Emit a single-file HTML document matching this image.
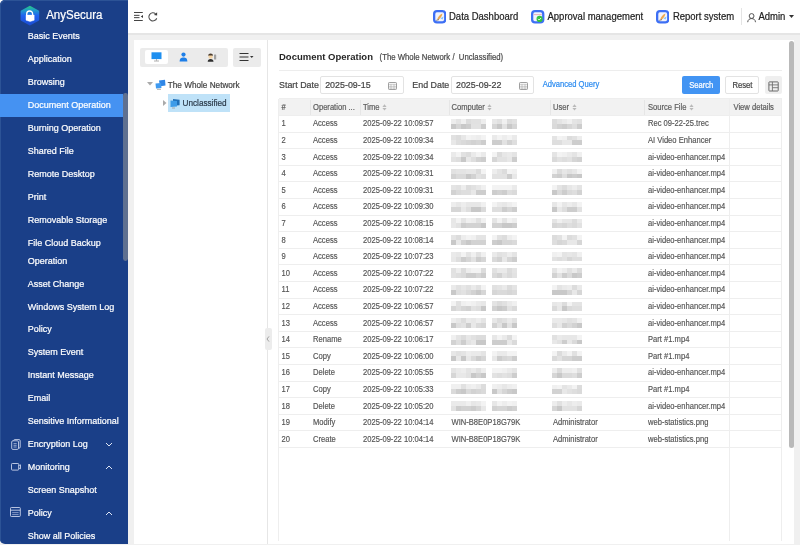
<!DOCTYPE html><html><head><meta charset="utf-8"><style>
*{margin:0;padding:0;box-sizing:border-box}
html,body{width:800px;height:545px;overflow:hidden;background:#f0f0f0;font-family:"Liberation Sans", sans-serif}
.a{position:absolute}
.t{position:absolute;white-space:nowrap;line-height:1;-webkit-text-stroke:0.2px currentColor;transform:scaleY(1.1);transform-origin:0 60%}
.tb{-webkit-text-stroke:0.15px currentColor}
.ns{transform:scaleY(1.03);-webkit-text-stroke:0}
i{position:absolute;display:block}
</style></head><body>

<div class="a" style="left:0;top:0;width:800px;height:35px;background:#fff;border-bottom:2px solid #e5e5e5"></div>
<div class="a" style="left:0;top:0;width:128px;height:544px;background:#1a3f88;border-radius:5px 0 0 5px;overflow:hidden;box-shadow:inset 1px 1px 0 #2c5396">
<svg class="a" style="left:20px;top:5px" width="20" height="21" viewBox="0 0 20 21">
<defs><linearGradient id="lg" x1="0" y1="0" x2="0" y2="1"><stop offset="0" stop-color="#27c08e"/><stop offset="0.18" stop-color="#1f9fc8"/><stop offset="0.5" stop-color="#1d63f2"/><stop offset="1" stop-color="#1c4ed2"/></linearGradient></defs>
<path d="M9.9 1.9 L18.1 6.4 L18.1 14.8 L9.9 19.3 L1.7 14.8 L1.7 6.4 Z" fill="url(#lg)" stroke="url(#lg)" stroke-width="2.2" stroke-linejoin="round"/>
<path d="M6.7 10.3 V8.9 A2.95 2.95 0 0 1 12.6 8.9 V10.3" fill="none" stroke="#fff" stroke-width="1.35"/>
<path d="M6 10.1 H14.2 V15.2 L10.1 16.6 L6 15.2 Z" fill="#fff" stroke="#fff" stroke-width="0.4" stroke-linejoin="round"/>
</svg>
<div class="t" style="left:46.2px;top:10.3px;font-size:11.5px;color:#fff">AnySecura</div>
<div class="t" style="left:27.7px;top:31.6px;font-size:9px;color:#fff">Basic Events</div>
<div class="t" style="left:27.7px;top:54.6px;font-size:9px;color:#fff">Application</div>
<div class="t" style="left:27.7px;top:77.6px;font-size:9px;color:#fff">Browsing</div>
<div class="a" style="left:0;top:93.5px;width:122.8px;height:23.3px;background:#4592f2"></div>
<div class="t" style="left:27.7px;top:100.6px;font-size:9px;color:#fff">Document Operation</div>
<div class="t" style="left:27.7px;top:123.6px;font-size:9px;color:#fff">Burning Operation</div>
<div class="t" style="left:27.7px;top:146.6px;font-size:9px;color:#fff">Shared File</div>
<div class="t" style="left:27.7px;top:169.6px;font-size:9px;color:#fff">Remote Desktop</div>
<div class="t" style="left:27.7px;top:192.6px;font-size:9px;color:#fff">Print</div>
<div class="t" style="left:27.7px;top:215.6px;font-size:9px;color:#fff">Removable Storage</div>
<div class="t" style="left:27.7px;top:238.6px;font-size:9px;color:#fff">File Cloud Backup</div>
<div class="t" style="left:27.7px;top:256.6px;font-size:9px;color:#fff">Operation</div>
<div class="t" style="left:27.7px;top:279.6px;font-size:9px;color:#fff">Asset Change</div>
<div class="t" style="left:27.7px;top:302.6px;font-size:9px;color:#fff">Windows System Log</div>
<div class="t" style="left:27.7px;top:324.6px;font-size:9px;color:#fff">Policy</div>
<div class="t" style="left:27.7px;top:347.6px;font-size:9px;color:#fff">System Event</div>
<div class="t" style="left:27.7px;top:370.6px;font-size:9px;color:#fff">Instant Message</div>
<div class="t" style="left:27.7px;top:393.6px;font-size:9px;color:#fff">Email</div>
<div class="t" style="left:27.7px;top:416.6px;font-size:9px;color:#fff">Sensitive Informational</div>
<div class="t" style="left:27.7px;top:439.6px;font-size:9px;color:#fff">Encryption Log</div>
<div class="t" style="left:27.7px;top:462.6px;font-size:9px;color:#fff">Monitoring</div>
<div class="t" style="left:27.7px;top:485.6px;font-size:9px;color:#fff">Screen Snapshot</div>
<div class="t" style="left:27.7px;top:508.6px;font-size:9px;color:#fff">Policy</div>
<div class="t" style="left:27.7px;top:531.6px;font-size:9px;color:#fff">Show all Policies</div>
<svg class="a" style="left:11px;top:438.5px" width="10" height="11" viewBox="0 0 10 11"><rect x="2.6" y="0.6" width="6.6" height="8.6" rx="1.2" fill="none" stroke="#c9d3ea" stroke-width="0.9"/><rect x="0.7" y="1.8" width="6.8" height="8.6" rx="1.2" fill="#1a3f88" stroke="#c9d3ea" stroke-width="0.9"/><path d="M2.5 4.6h3.2M2.5 6.3h3.2M2.5 8h3.2" stroke="#c9d3ea" stroke-width="0.7"/></svg>
<svg class="a" style="left:11.3px;top:463.3px" width="10" height="8" viewBox="0 0 10 8"><rect x="0.5" y="0.5" width="7.2" height="6.6" rx="0.8" fill="none" stroke="#c9d3ea" stroke-width="0.9"/><path d="M7.7 2.6 L9.5 1.8 V5.8 L7.7 5" fill="none" stroke="#c9d3ea" stroke-width="0.9"/></svg>
<svg class="a" style="left:10px;top:507.3px" width="11" height="10" viewBox="0 0 11 10"><rect x="0.5" y="0.5" width="9.8" height="9" rx="0.8" fill="none" stroke="#c9d3ea" stroke-width="0.9"/><path d="M0.5 3.2h9.8" stroke="#c9d3ea" stroke-width="0.9"/><path d="M2.2 5.6h6.4M2.2 7.6h6.4" stroke="#9fb0d6" stroke-width="0.8"/></svg>
<svg class="a" style="left:105.3px;top:441.5px" width="8" height="5" viewBox="0 0 8 5"><path d="M1 1 L4 4 L7 1" fill="none" stroke="#dfe6f5" stroke-width="1"/></svg>
<svg class="a" style="left:105.3px;top:465px" width="8" height="5" viewBox="0 0 8 5"><path d="M1 4 L4 1 L7 4" fill="none" stroke="#dfe6f5" stroke-width="1"/></svg>
<svg class="a" style="left:105.3px;top:510.8px" width="8" height="5" viewBox="0 0 8 5"><path d="M1 4 L4 1 L7 4" fill="none" stroke="#dfe6f5" stroke-width="1"/></svg>
<div class="a" style="left:122.8px;top:93px;width:4.8px;height:168px;background:#5f7090;border-radius:2.4px"></div>
</div>
<svg class="a" style="left:133px;top:11px" width="11" height="11" viewBox="0 0 11 11"><path d="M1 1.5h8.75M1 4.35h5.5M1 6.65h5.5M1 9.5h8.75" stroke="#444" stroke-width="1"/><path d="M10 3.9 L7.8 5.5 L10 7.1Z" fill="#333"/></svg>
<svg class="a" style="left:147px;top:11px" width="12" height="12" viewBox="0 0 12 12"><path d="M9.75 7.2 A4.05 4.05 0 1 1 8.6 2.8" fill="none" stroke="#505050" stroke-width="1.05"/><path d="M10.1 1.2 L10.1 4.6 L6.9 4.1Z" fill="#404040"/></svg>
<svg class="a" style="left:432.5px;top:10.2px" width="13.4" height="13.5" viewBox="0 0 13.4 13.5"><rect x="0" y="0" width="13.4" height="13.5" rx="4" fill="#3d6ff4"/><rect x="2.3" y="2.3" width="8.8" height="8.9" rx="1.6" fill="#f1f3fc"/><path d="M4.2 9.6 C4.8 7 6.8 4.5 9.4 3.4 C9.2 5.8 7.6 8.2 5.4 9.8Z" fill="#eda84e"/><path d="M7.4 8.2 L10.6 6.6 L9.6 9.6Z" fill="#7fc3f9"/><path d="M3.2 10.4 L6 9.6" stroke="#555" stroke-width="0.7"/></svg>
<div class="t" style="left:449px;top:12.4px;font-size:9.5px;color:#222">Data Dashboard</div>
<svg class="a" style="left:531.2px;top:10.2px" width="13.4" height="13.5" viewBox="0 0 13.4 13.5"><rect x="0" y="0" width="13.4" height="13.5" rx="4" fill="#3d6ff4"/><rect x="2.3" y="2.3" width="8.8" height="8.9" rx="1.6" fill="#f1f3fc"/><path d="M2.6 4.6 H10.8" stroke="#e6a0a8" stroke-width="0.8"/><circle cx="8.6" cy="8.9" r="3.1" fill="#35c23f"/><path d="M7.1 8.9l1.1 1.1 1.9-2" stroke="#fff" stroke-width="0.9" fill="none"/></svg>
<div class="t" style="left:547.5px;top:12.4px;font-size:9.5px;color:#222">Approval management</div>
<svg class="a" style="left:655.9px;top:10.2px" width="13.4" height="13.5" viewBox="0 0 13.4 13.5"><rect x="0" y="0" width="13.4" height="13.5" rx="4" fill="#3d6ff4"/><rect x="2.3" y="2.3" width="8.8" height="8.9" rx="1.6" fill="#f1f3fc"/><path d="M4.2 9.6 C4.8 7 6.8 4.5 9.4 3.4 C9.2 5.8 7.6 8.2 5.4 9.8Z" fill="#eda84e"/><path d="M7.4 8.2 L10.6 6.6 L9.6 9.6Z" fill="#7fc3f9"/><path d="M3.2 10.4 L6 9.6" stroke="#555" stroke-width="0.7"/></svg>
<div class="t" style="left:672.9px;top:12.4px;font-size:9.5px;color:#222">Report system</div>
<div class="a" style="left:741px;top:8px;width:1px;height:17px;background:#e4e4e4"></div>
<svg class="a" style="left:747px;top:12.6px" width="10" height="10" viewBox="0 0 10 10"><circle cx="4.6" cy="3" r="2.4" fill="none" stroke="#444" stroke-width="0.9"/><path d="M0.7 9.2 C0.9 6.6 2.5 5.6 4.6 5.6 C6.7 5.6 8.3 6.6 8.5 9.2" fill="none" stroke="#444" stroke-width="0.9"/></svg>
<div class="t" style="left:758.4px;top:12.4px;font-size:9.5px;color:#222">Admin</div>
<svg class="a" style="left:788.5px;top:15px" width="5" height="3" viewBox="0 0 5 3"><path d="M0 0H5L2.5 3Z" fill="#333"/></svg>
<div class="a" style="left:133.7px;top:40.2px;width:133.3px;height:503.5px;background:#fff"></div>
<div class="a" style="left:267px;top:40.3px;width:1px;height:503.4px;background:#e6e6e6"></div>
<div class="a" style="left:140px;top:47.5px;width:87.5px;height:19px;background:#ebebeb;border-radius:2px"></div>
<div class="a" style="left:144.8px;top:50px;width:23px;height:14px;background:#fff;border-radius:2px"></div>
<svg class="a" style="left:150.5px;top:52px" width="11" height="10" viewBox="0 0 11 10"><rect x="0.5" y="0.3" width="10" height="6.8" fill="#1e8ff0"/><path d="M5.5 7.1v1.6M3 9h5" stroke="#999" stroke-width="0.8"/></svg>
<svg class="a" style="left:179px;top:52px" width="9" height="10" viewBox="0 0 9 10"><circle cx="4.5" cy="2.6" r="2.1" fill="#1e7fe8"/><path d="M0.6 9.5 C0.8 6.2 2.2 5.4 4.5 5.4 C6.8 5.4 8.2 6.2 8.4 9.5Z" fill="#1e7fe8"/></svg>
<svg class="a" style="left:206.5px;top:52.5px" width="10" height="9" viewBox="0 0 10 9"><path d="M0.7 8.8 C0.8 6.8 1.8 6 3.6 6 C5.4 6 6.4 6.8 6.5 8.8Z" fill="#2e2e2e"/><rect x="1.5" y="1.8" width="4.2" height="3.8" rx="1.6" fill="#f4d3a2"/><path d="M1.2 3 C1.2 1 2.3 0.4 3.6 0.4 C4.9 0.4 6 1 6 3 L5.4 2.4 H1.8Z" fill="#4b3b2c"/><rect x="7" y="1.6" width="2.2" height="5" rx="0.4" fill="#a0a0a0"/></svg>
<div class="a" style="left:233px;top:47.5px;width:27.5px;height:19px;background:#ebebeb;border-radius:2px"></div>
<svg class="a" style="left:239px;top:52px" width="15" height="10" viewBox="0 0 15 10"><path d="M0.5 1.5h9M0.5 5h9M0.5 8.5h9" stroke="#333" stroke-width="1.2"/><path d="M11 4 h3.5 L12.75 6Z" fill="#333"/></svg>
<svg class="a" style="left:146.5px;top:81.5px" width="6" height="4" viewBox="0 0 6 4"><path d="M0 0H6L3 3.5Z" fill="#aaa"/></svg>
<svg class="a" style="left:154.5px;top:78.5px" width="11" height="11" viewBox="0 0 11 11"><path d="M4 1.5 L10 0.8 L10.5 6.5 L5 7.2Z" fill="#2f86e6"/><path d="M0.5 4.5 L6 4 L6.5 9 L1 9.6Z" fill="#3f9af0"/><path d="M2 10.3h4" stroke="#999" stroke-width="0.8"/></svg>
<div class="t" style="left:167.8px;top:81.6px;font-size:8.2px;color:#444">The Whole Network</div>
<div class="a" style="left:168.2px;top:94.3px;width:61.5px;height:17.6px;background:#bfe2f8"></div>
<svg class="a" style="left:162.5px;top:99.5px" width="4" height="6" viewBox="0 0 4 6"><path d="M0 0L3.5 3L0 6Z" fill="#aaa"/></svg>
<svg class="a" style="left:170.3px;top:97.5px" width="10" height="11" viewBox="0 0 10 11"><path d="M3 1 L9.6 1.8 L9.6 7.2 L3 7.8Z" fill="#1f6fb8"/><path d="M0.5 2.5 L7 3 L7 8.5 L0.5 9Z" fill="#3d9be8"/><path d="M2 10h3" stroke="#999" stroke-width="0.8"/></svg>
<div class="t" style="left:182.5px;top:99.6px;font-size:8.2px;color:#2b3a4a">Unclassified</div>
<div class="a" style="left:268px;top:40.3px;width:526px;height:503.4px;background:#fff"></div>
<div class="a" style="left:264.5px;top:328px;width:7.3px;height:22px;background:#ececec;border-radius:2px"></div>
<svg class="a" style="left:266.3px;top:336px" width="4" height="6" viewBox="0 0 4 6"><path d="M3 0.4 L1 3 L3 5.6" fill="none" stroke="#888" stroke-width="0.75"/></svg>
<div class="t ns" style="left:279px;top:52.4px;font-size:9.5px;font-weight:bold;color:#262626">Document Operation</div>
<div class="t" style="left:379.6px;top:54.2px;font-size:7.75px;color:#4a4a4a">(The Whole Network /&nbsp; Unclassified)</div>
<div class="a" style="left:279px;top:69.5px;width:503px;height:1px;background:#ededed"></div>
<div class="t" style="left:279px;top:81.1px;font-size:8.9px;color:#444">Start Date</div>
<div class="a" style="left:320.2px;top:76.3px;width:84px;height:17.4px;border:1px solid #e3e3e3;border-radius:2px;background:#fff"></div>
<div class="t" style="left:325.2px;top:81.1px;font-size:8.9px;color:#444">2025-09-15</div>
<svg class="a" style="left:388px;top:81.5px" width="9" height="8" viewBox="0 0 9 8"><rect x="0.5" y="0.5" width="8" height="7" rx="0.8" fill="none" stroke="#888" stroke-width="0.8"/><path d="M0.5 2.3h8M0.5 4.3h8M0.5 6h8M3 2.3v5.2M6 2.3v5.2" stroke="#999" stroke-width="0.5"/></svg>
<div class="t" style="left:412.3px;top:81.1px;font-size:8.9px;color:#444">End Date</div>
<div class="a" style="left:451.2px;top:76.3px;width:82.6px;height:17.4px;border:1px solid #e3e3e3;border-radius:2px;background:#fff"></div>
<div class="t" style="left:456px;top:81.1px;font-size:8.9px;color:#444">2025-09-22</div>
<svg class="a" style="left:518.5px;top:81.5px" width="9" height="8" viewBox="0 0 9 8"><rect x="0.5" y="0.5" width="8" height="7" rx="0.8" fill="none" stroke="#888" stroke-width="0.8"/><path d="M0.5 2.3h8M0.5 4.3h8M0.5 6h8M3 2.3v5.2M6 2.3v5.2" stroke="#999" stroke-width="0.5"/></svg>
<div class="t" style="left:542.7px;top:80.8px;font-size:7.6px;color:#2d8cf0">Advanced Query</div>
<div class="a" style="left:682.2px;top:76px;width:37.7px;height:18px;background:#4294f3;border-radius:2px"></div>
<div class="t" style="left:689.2px;top:82.2px;font-size:7.6px;color:#fff">Search</div>
<div class="a" style="left:725.2px;top:76px;width:34.2px;height:18px;border:1px solid #e3e3e3;border-radius:2px;background:#fff"></div>
<div class="t" style="left:732.4px;top:82.2px;font-size:7.7px;color:#444">Reset</div>
<div class="a" style="left:764.6px;top:76px;width:17.5px;height:18px;background:#efefef;border-radius:2px"></div>
<svg class="a" style="left:767.8px;top:80.6px" width="11" height="11" viewBox="0 0 11 11"><rect x="0.9" y="0.9" width="9.3" height="9.1" rx="0.5" fill="none" stroke="#6a6a6a" stroke-width="1"/><path d="M0.9 3.9h9.3M4.4 0.9v9.1M4.4 6.7h5.8" stroke="#6a6a6a" stroke-width="0.85"/></svg>
<div class="a" style="left:278.8px;top:98.8px;width:502.8px;height:16.7px;background:#f2f2f2"></div>
<div class="a" style="left:278.3px;top:98.8px;width:1px;height:442.2px;background:#eeeeee"></div>
<div class="a" style="left:729.1px;top:98.8px;width:1px;height:442.2px;background:#eeeeee"></div>
<div class="a" style="left:781.1px;top:98.8px;width:1px;height:442.2px;background:#eeeeee"></div>
<div class="a" style="left:309.7px;top:99.8px;width:1px;height:15.2px;background:#e6e6e6"></div>
<div class="a" style="left:359.9px;top:99.8px;width:1px;height:15.2px;background:#e6e6e6"></div>
<div class="a" style="left:448.5px;top:99.8px;width:1px;height:15.2px;background:#e6e6e6"></div>
<div class="a" style="left:549.8px;top:99.8px;width:1px;height:15.2px;background:#e6e6e6"></div>
<div class="a" style="left:644.2px;top:99.8px;width:1px;height:15.2px;background:#e6e6e6"></div>
<div class="a" style="left:278.8px;top:115.0px;width:502.8px;height:1px;background:#eeeeee"></div>
<div class="a" style="left:278.8px;top:131.6px;width:502.8px;height:1px;background:#eeeeee"></div>
<div class="a" style="left:278.8px;top:148.2px;width:502.8px;height:1px;background:#eeeeee"></div>
<div class="a" style="left:278.8px;top:164.8px;width:502.8px;height:1px;background:#eeeeee"></div>
<div class="a" style="left:278.8px;top:181.4px;width:502.8px;height:1px;background:#eeeeee"></div>
<div class="a" style="left:278.8px;top:198.0px;width:502.8px;height:1px;background:#eeeeee"></div>
<div class="a" style="left:278.8px;top:214.6px;width:502.8px;height:1px;background:#eeeeee"></div>
<div class="a" style="left:278.8px;top:231.2px;width:502.8px;height:1px;background:#eeeeee"></div>
<div class="a" style="left:278.8px;top:247.8px;width:502.8px;height:1px;background:#eeeeee"></div>
<div class="a" style="left:278.8px;top:264.4px;width:502.8px;height:1px;background:#eeeeee"></div>
<div class="a" style="left:278.8px;top:281.0px;width:502.8px;height:1px;background:#eeeeee"></div>
<div class="a" style="left:278.8px;top:297.6px;width:502.8px;height:1px;background:#eeeeee"></div>
<div class="a" style="left:278.8px;top:314.2px;width:502.8px;height:1px;background:#eeeeee"></div>
<div class="a" style="left:278.8px;top:330.8px;width:502.8px;height:1px;background:#eeeeee"></div>
<div class="a" style="left:278.8px;top:347.4px;width:502.8px;height:1px;background:#eeeeee"></div>
<div class="a" style="left:278.8px;top:364.0px;width:502.8px;height:1px;background:#eeeeee"></div>
<div class="a" style="left:278.8px;top:380.6px;width:502.8px;height:1px;background:#eeeeee"></div>
<div class="a" style="left:278.8px;top:397.2px;width:502.8px;height:1px;background:#eeeeee"></div>
<div class="a" style="left:278.8px;top:413.8px;width:502.8px;height:1px;background:#eeeeee"></div>
<div class="a" style="left:278.8px;top:430.4px;width:502.8px;height:1px;background:#eeeeee"></div>
<div class="a" style="left:278.8px;top:447.0px;width:502.8px;height:1px;background:#eeeeee"></div>
<div class="a" style="left:278.8px;top:98.3px;width:502.8px;height:1px;background:#eeeeee"></div>
<div class="t" style="left:281.5px;top:103.6px;font-size:7.6px;color:#606060">#</div>
<div class="t" style="left:313px;top:103.6px;font-size:7.6px;color:#606060">Operation ...</div>
<div class="t" style="left:363px;top:103.6px;font-size:7.6px;color:#606060">Time</div>
<div class="t" style="left:451.5px;top:103.6px;font-size:7.6px;color:#606060">Computer</div>
<div class="t" style="left:553px;top:103.6px;font-size:7.6px;color:#606060">User</div>
<div class="t" style="left:648px;top:103.6px;font-size:7.6px;color:#606060">Source File</div>
<div class="t" style="left:733.5px;top:103.6px;font-size:7.6px;color:#606060">View details</div>
<svg class="a" style="left:382.4px;top:103.9px" width="5" height="7" viewBox="0 0 5 7"><path d="M2.5 0.2L4.6 2.9H0.4Z M2.5 6.6L4.6 3.9H0.4Z" fill="#b9b9b9"/></svg>
<svg class="a" style="left:487.4px;top:103.9px" width="5" height="7" viewBox="0 0 5 7"><path d="M2.5 0.2L4.6 2.9H0.4Z M2.5 6.6L4.6 3.9H0.4Z" fill="#b9b9b9"/></svg>
<svg class="a" style="left:571.8px;top:103.9px" width="5" height="7" viewBox="0 0 5 7"><path d="M2.5 0.2L4.6 2.9H0.4Z M2.5 6.6L4.6 3.9H0.4Z" fill="#b9b9b9"/></svg>
<svg class="a" style="left:688.9px;top:103.9px" width="5" height="7" viewBox="0 0 5 7"><path d="M2.5 0.2L4.6 2.9H0.4Z M2.5 6.6L4.6 3.9H0.4Z" fill="#b9b9b9"/></svg>
<div class="t tb" style="left:281.5px;top:120.3px;font-size:7.6px;color:#555">1</div>
<div class="t tb" style="left:313px;top:120.3px;font-size:7.6px;color:#555">Access</div>
<div class="t tb" style="left:363px;top:120.3px;font-size:7.6px;color:#555">2025-09-22 10:09:57</div>
<div class="t tb" style="left:648px;top:120.3px;font-size:7.6px;color:#555">Rec 09-22-25.trec</div>
<div class="a" style="left:451.2px;top:118.7px;width:35px;height:10.2px;filter:blur(0.5px)"><i style="left:0.0px;top:0.0px;width:5px;height:5.1px;background:rgb(237,237,237)"></i><i style="left:5.0px;top:0.0px;width:5px;height:5.1px;background:rgb(228,228,228)"></i><i style="left:10.0px;top:0.0px;width:5px;height:5.1px;background:rgb(240,240,240)"></i><i style="left:15.0px;top:0.0px;width:5px;height:5.1px;background:rgb(220,220,220)"></i><i style="left:20.0px;top:0.0px;width:5px;height:5.1px;background:rgb(225,225,225)"></i><i style="left:25.0px;top:0.0px;width:5px;height:5.1px;background:rgb(225,225,225)"></i><i style="left:30.0px;top:0.0px;width:5px;height:5.1px;background:rgb(237,237,237)"></i><i style="left:0.0px;top:5.1px;width:5px;height:5.1px;background:rgb(200,200,200)"></i><i style="left:5.0px;top:5.1px;width:5px;height:5.1px;background:rgb(214,214,214)"></i><i style="left:10.0px;top:5.1px;width:5px;height:5.1px;background:rgb(200,200,200)"></i><i style="left:15.0px;top:5.1px;width:5px;height:5.1px;background:rgb(205,205,205)"></i><i style="left:20.0px;top:5.1px;width:5px;height:5.1px;background:rgb(226,226,226)"></i><i style="left:25.0px;top:5.1px;width:5px;height:5.1px;background:rgb(226,226,226)"></i><i style="left:30.0px;top:5.1px;width:5px;height:5.1px;background:rgb(205,205,205)"></i></div>
<div class="a" style="left:492.1px;top:118.7px;width:25px;height:10.2px;filter:blur(0.5px)"><i style="left:0.0px;top:0.0px;width:5px;height:5.1px;background:rgb(231,231,231)"></i><i style="left:5.0px;top:0.0px;width:5px;height:5.1px;background:rgb(225,225,225)"></i><i style="left:10.0px;top:0.0px;width:5px;height:5.1px;background:rgb(240,240,240)"></i><i style="left:15.0px;top:0.0px;width:5px;height:5.1px;background:rgb(220,220,220)"></i><i style="left:20.0px;top:0.0px;width:5px;height:5.1px;background:rgb(225,225,225)"></i><i style="left:0.0px;top:5.1px;width:5px;height:5.1px;background:rgb(214,214,214)"></i><i style="left:5.0px;top:5.1px;width:5px;height:5.1px;background:rgb(200,200,200)"></i><i style="left:10.0px;top:5.1px;width:5px;height:5.1px;background:rgb(226,226,226)"></i><i style="left:15.0px;top:5.1px;width:5px;height:5.1px;background:rgb(200,200,200)"></i><i style="left:20.0px;top:5.1px;width:5px;height:5.1px;background:rgb(214,214,214)"></i></div>
<div class="a" style="left:551.5px;top:118.9px;width:30px;height:9.8px;filter:blur(0.5px)"><i style="left:0.0px;top:0.0px;width:5px;height:4.9px;background:rgb(220,220,220)"></i><i style="left:5.0px;top:0.0px;width:5px;height:4.9px;background:rgb(228,228,228)"></i><i style="left:10.0px;top:0.0px;width:5px;height:4.9px;background:rgb(234,234,234)"></i><i style="left:15.0px;top:0.0px;width:5px;height:4.9px;background:rgb(240,240,240)"></i><i style="left:20.0px;top:0.0px;width:5px;height:4.9px;background:rgb(228,228,228)"></i><i style="left:25.0px;top:0.0px;width:5px;height:4.9px;background:rgb(225,225,225)"></i><i style="left:0.0px;top:4.9px;width:5px;height:4.9px;background:rgb(218,218,218)"></i><i style="left:5.0px;top:4.9px;width:5px;height:4.9px;background:rgb(210,210,210)"></i><i style="left:10.0px;top:4.9px;width:5px;height:4.9px;background:rgb(205,205,205)"></i><i style="left:15.0px;top:4.9px;width:5px;height:4.9px;background:rgb(214,214,214)"></i><i style="left:20.0px;top:4.9px;width:5px;height:4.9px;background:rgb(222,222,222)"></i><i style="left:25.0px;top:4.9px;width:5px;height:4.9px;background:rgb(205,205,205)"></i></div>
<div class="t tb" style="left:281.5px;top:136.9px;font-size:7.6px;color:#555">2</div>
<div class="t tb" style="left:313px;top:136.9px;font-size:7.6px;color:#555">Access</div>
<div class="t tb" style="left:363px;top:136.9px;font-size:7.6px;color:#555">2025-09-22 10:09:34</div>
<div class="t tb" style="left:648px;top:136.9px;font-size:7.6px;color:#555">AI Video Enhancer</div>
<div class="a" style="left:451.2px;top:135.3px;width:35px;height:10.2px;filter:blur(0.5px)"><i style="left:0.0px;top:0.0px;width:5px;height:5.1px;background:rgb(225,225,225)"></i><i style="left:5.0px;top:0.0px;width:5px;height:5.1px;background:rgb(220,220,220)"></i><i style="left:10.0px;top:0.0px;width:5px;height:5.1px;background:rgb(231,231,231)"></i><i style="left:15.0px;top:0.0px;width:5px;height:5.1px;background:rgb(243,243,243)"></i><i style="left:20.0px;top:0.0px;width:5px;height:5.1px;background:rgb(240,240,240)"></i><i style="left:25.0px;top:0.0px;width:5px;height:5.1px;background:rgb(237,237,237)"></i><i style="left:30.0px;top:0.0px;width:5px;height:5.1px;background:rgb(243,243,243)"></i><i style="left:0.0px;top:5.1px;width:5px;height:5.1px;background:rgb(232,232,232)"></i><i style="left:5.0px;top:5.1px;width:5px;height:5.1px;background:rgb(222,222,222)"></i><i style="left:10.0px;top:5.1px;width:5px;height:5.1px;background:rgb(218,218,218)"></i><i style="left:15.0px;top:5.1px;width:5px;height:5.1px;background:rgb(214,214,214)"></i><i style="left:20.0px;top:5.1px;width:5px;height:5.1px;background:rgb(210,210,210)"></i><i style="left:25.0px;top:5.1px;width:5px;height:5.1px;background:rgb(214,214,214)"></i><i style="left:30.0px;top:5.1px;width:5px;height:5.1px;background:rgb(205,205,205)"></i></div>
<div class="a" style="left:492.1px;top:135.3px;width:25px;height:10.2px;filter:blur(0.5px)"><i style="left:0.0px;top:0.0px;width:5px;height:5.1px;background:rgb(234,234,234)"></i><i style="left:5.0px;top:0.0px;width:5px;height:5.1px;background:rgb(243,243,243)"></i><i style="left:10.0px;top:0.0px;width:5px;height:5.1px;background:rgb(237,237,237)"></i><i style="left:15.0px;top:0.0px;width:5px;height:5.1px;background:rgb(243,243,243)"></i><i style="left:20.0px;top:0.0px;width:5px;height:5.1px;background:rgb(234,234,234)"></i><i style="left:0.0px;top:5.1px;width:5px;height:5.1px;background:rgb(205,205,205)"></i><i style="left:5.0px;top:5.1px;width:5px;height:5.1px;background:rgb(205,205,205)"></i><i style="left:10.0px;top:5.1px;width:5px;height:5.1px;background:rgb(226,226,226)"></i><i style="left:15.0px;top:5.1px;width:5px;height:5.1px;background:rgb(210,210,210)"></i><i style="left:20.0px;top:5.1px;width:5px;height:5.1px;background:rgb(222,222,222)"></i></div>
<div class="a" style="left:551.5px;top:135.5px;width:30px;height:9.8px;filter:blur(0.5px)"><i style="left:0.0px;top:0.0px;width:5px;height:4.9px;background:rgb(228,228,228)"></i><i style="left:5.0px;top:0.0px;width:5px;height:4.9px;background:rgb(243,243,243)"></i><i style="left:10.0px;top:0.0px;width:5px;height:4.9px;background:rgb(240,240,240)"></i><i style="left:15.0px;top:0.0px;width:5px;height:4.9px;background:rgb(220,220,220)"></i><i style="left:20.0px;top:0.0px;width:5px;height:4.9px;background:rgb(225,225,225)"></i><i style="left:25.0px;top:0.0px;width:5px;height:4.9px;background:rgb(237,237,237)"></i><i style="left:0.0px;top:4.9px;width:5px;height:4.9px;background:rgb(222,222,222)"></i><i style="left:5.0px;top:4.9px;width:5px;height:4.9px;background:rgb(222,222,222)"></i><i style="left:10.0px;top:4.9px;width:5px;height:4.9px;background:rgb(232,232,232)"></i><i style="left:15.0px;top:4.9px;width:5px;height:4.9px;background:rgb(232,232,232)"></i><i style="left:20.0px;top:4.9px;width:5px;height:4.9px;background:rgb(205,205,205)"></i><i style="left:25.0px;top:4.9px;width:5px;height:4.9px;background:rgb(205,205,205)"></i></div>
<div class="t tb" style="left:281.5px;top:153.5px;font-size:7.6px;color:#555">3</div>
<div class="t tb" style="left:313px;top:153.5px;font-size:7.6px;color:#555">Access</div>
<div class="t tb" style="left:363px;top:153.5px;font-size:7.6px;color:#555">2025-09-22 10:09:34</div>
<div class="t tb" style="left:648px;top:153.5px;font-size:7.6px;color:#555">ai-video-enhancer.mp4</div>
<div class="a" style="left:451.2px;top:151.9px;width:35px;height:10.2px;filter:blur(0.5px)"><i style="left:0.0px;top:0.0px;width:5px;height:5.1px;background:rgb(234,234,234)"></i><i style="left:5.0px;top:0.0px;width:5px;height:5.1px;background:rgb(243,243,243)"></i><i style="left:10.0px;top:0.0px;width:5px;height:5.1px;background:rgb(225,225,225)"></i><i style="left:15.0px;top:0.0px;width:5px;height:5.1px;background:rgb(220,220,220)"></i><i style="left:20.0px;top:0.0px;width:5px;height:5.1px;background:rgb(234,234,234)"></i><i style="left:25.0px;top:0.0px;width:5px;height:5.1px;background:rgb(243,243,243)"></i><i style="left:30.0px;top:0.0px;width:5px;height:5.1px;background:rgb(234,234,234)"></i><i style="left:0.0px;top:5.1px;width:5px;height:5.1px;background:rgb(226,226,226)"></i><i style="left:5.0px;top:5.1px;width:5px;height:5.1px;background:rgb(222,222,222)"></i><i style="left:10.0px;top:5.1px;width:5px;height:5.1px;background:rgb(200,200,200)"></i><i style="left:15.0px;top:5.1px;width:5px;height:5.1px;background:rgb(232,232,232)"></i><i style="left:20.0px;top:5.1px;width:5px;height:5.1px;background:rgb(222,222,222)"></i><i style="left:25.0px;top:5.1px;width:5px;height:5.1px;background:rgb(210,210,210)"></i><i style="left:30.0px;top:5.1px;width:5px;height:5.1px;background:rgb(205,205,205)"></i></div>
<div class="a" style="left:492.1px;top:151.9px;width:25px;height:10.2px;filter:blur(0.5px)"><i style="left:0.0px;top:0.0px;width:5px;height:5.1px;background:rgb(243,243,243)"></i><i style="left:5.0px;top:0.0px;width:5px;height:5.1px;background:rgb(220,220,220)"></i><i style="left:10.0px;top:0.0px;width:5px;height:5.1px;background:rgb(231,231,231)"></i><i style="left:15.0px;top:0.0px;width:5px;height:5.1px;background:rgb(234,234,234)"></i><i style="left:20.0px;top:0.0px;width:5px;height:5.1px;background:rgb(228,228,228)"></i><i style="left:0.0px;top:5.1px;width:5px;height:5.1px;background:rgb(214,214,214)"></i><i style="left:5.0px;top:5.1px;width:5px;height:5.1px;background:rgb(226,226,226)"></i><i style="left:10.0px;top:5.1px;width:5px;height:5.1px;background:rgb(226,226,226)"></i><i style="left:15.0px;top:5.1px;width:5px;height:5.1px;background:rgb(232,232,232)"></i><i style="left:20.0px;top:5.1px;width:5px;height:5.1px;background:rgb(205,205,205)"></i></div>
<div class="a" style="left:551.5px;top:152.1px;width:30px;height:9.8px;filter:blur(0.5px)"><i style="left:0.0px;top:0.0px;width:5px;height:4.9px;background:rgb(228,228,228)"></i><i style="left:5.0px;top:0.0px;width:5px;height:4.9px;background:rgb(243,243,243)"></i><i style="left:10.0px;top:0.0px;width:5px;height:4.9px;background:rgb(240,240,240)"></i><i style="left:15.0px;top:0.0px;width:5px;height:4.9px;background:rgb(234,234,234)"></i><i style="left:20.0px;top:0.0px;width:5px;height:4.9px;background:rgb(228,228,228)"></i><i style="left:25.0px;top:0.0px;width:5px;height:4.9px;background:rgb(240,240,240)"></i><i style="left:0.0px;top:4.9px;width:5px;height:4.9px;background:rgb(218,218,218)"></i><i style="left:5.0px;top:4.9px;width:5px;height:4.9px;background:rgb(226,226,226)"></i><i style="left:10.0px;top:4.9px;width:5px;height:4.9px;background:rgb(222,222,222)"></i><i style="left:15.0px;top:4.9px;width:5px;height:4.9px;background:rgb(226,226,226)"></i><i style="left:20.0px;top:4.9px;width:5px;height:4.9px;background:rgb(214,214,214)"></i><i style="left:25.0px;top:4.9px;width:5px;height:4.9px;background:rgb(210,210,210)"></i></div>
<div class="t tb" style="left:281.5px;top:170.1px;font-size:7.6px;color:#555">4</div>
<div class="t tb" style="left:313px;top:170.1px;font-size:7.6px;color:#555">Access</div>
<div class="t tb" style="left:363px;top:170.1px;font-size:7.6px;color:#555">2025-09-22 10:09:31</div>
<div class="t tb" style="left:648px;top:170.1px;font-size:7.6px;color:#555">ai-video-enhancer.mp4</div>
<div class="a" style="left:451.2px;top:168.5px;width:35px;height:10.2px;filter:blur(0.5px)"><i style="left:0.0px;top:0.0px;width:5px;height:5.1px;background:rgb(225,225,225)"></i><i style="left:5.0px;top:0.0px;width:5px;height:5.1px;background:rgb(228,228,228)"></i><i style="left:10.0px;top:0.0px;width:5px;height:5.1px;background:rgb(228,228,228)"></i><i style="left:15.0px;top:0.0px;width:5px;height:5.1px;background:rgb(231,231,231)"></i><i style="left:20.0px;top:0.0px;width:5px;height:5.1px;background:rgb(231,231,231)"></i><i style="left:25.0px;top:0.0px;width:5px;height:5.1px;background:rgb(220,220,220)"></i><i style="left:30.0px;top:0.0px;width:5px;height:5.1px;background:rgb(243,243,243)"></i><i style="left:0.0px;top:5.1px;width:5px;height:5.1px;background:rgb(210,210,210)"></i><i style="left:5.0px;top:5.1px;width:5px;height:5.1px;background:rgb(218,218,218)"></i><i style="left:10.0px;top:5.1px;width:5px;height:5.1px;background:rgb(218,218,218)"></i><i style="left:15.0px;top:5.1px;width:5px;height:5.1px;background:rgb(200,200,200)"></i><i style="left:20.0px;top:5.1px;width:5px;height:5.1px;background:rgb(210,210,210)"></i><i style="left:25.0px;top:5.1px;width:5px;height:5.1px;background:rgb(226,226,226)"></i><i style="left:30.0px;top:5.1px;width:5px;height:5.1px;background:rgb(222,222,222)"></i></div>
<div class="a" style="left:492.1px;top:168.5px;width:25px;height:10.2px;filter:blur(0.5px)"><i style="left:0.0px;top:0.0px;width:5px;height:5.1px;background:rgb(237,237,237)"></i><i style="left:5.0px;top:0.0px;width:5px;height:5.1px;background:rgb(228,228,228)"></i><i style="left:10.0px;top:0.0px;width:5px;height:5.1px;background:rgb(220,220,220)"></i><i style="left:15.0px;top:0.0px;width:5px;height:5.1px;background:rgb(243,243,243)"></i><i style="left:20.0px;top:0.0px;width:5px;height:5.1px;background:rgb(240,240,240)"></i><i style="left:0.0px;top:5.1px;width:5px;height:5.1px;background:rgb(226,226,226)"></i><i style="left:5.0px;top:5.1px;width:5px;height:5.1px;background:rgb(226,226,226)"></i><i style="left:10.0px;top:5.1px;width:5px;height:5.1px;background:rgb(226,226,226)"></i><i style="left:15.0px;top:5.1px;width:5px;height:5.1px;background:rgb(205,205,205)"></i><i style="left:20.0px;top:5.1px;width:5px;height:5.1px;background:rgb(232,232,232)"></i></div>
<div class="a" style="left:551.5px;top:168.7px;width:30px;height:9.8px;filter:blur(0.5px)"><i style="left:0.0px;top:0.0px;width:5px;height:4.9px;background:rgb(240,240,240)"></i><i style="left:5.0px;top:0.0px;width:5px;height:4.9px;background:rgb(220,220,220)"></i><i style="left:10.0px;top:0.0px;width:5px;height:4.9px;background:rgb(231,231,231)"></i><i style="left:15.0px;top:0.0px;width:5px;height:4.9px;background:rgb(225,225,225)"></i><i style="left:20.0px;top:0.0px;width:5px;height:4.9px;background:rgb(231,231,231)"></i><i style="left:25.0px;top:0.0px;width:5px;height:4.9px;background:rgb(243,243,243)"></i><i style="left:0.0px;top:4.9px;width:5px;height:4.9px;background:rgb(210,210,210)"></i><i style="left:5.0px;top:4.9px;width:5px;height:4.9px;background:rgb(205,205,205)"></i><i style="left:10.0px;top:4.9px;width:5px;height:4.9px;background:rgb(222,222,222)"></i><i style="left:15.0px;top:4.9px;width:5px;height:4.9px;background:rgb(200,200,200)"></i><i style="left:20.0px;top:4.9px;width:5px;height:4.9px;background:rgb(205,205,205)"></i><i style="left:25.0px;top:4.9px;width:5px;height:4.9px;background:rgb(200,200,200)"></i></div>
<div class="t tb" style="left:281.5px;top:186.7px;font-size:7.6px;color:#555">5</div>
<div class="t tb" style="left:313px;top:186.7px;font-size:7.6px;color:#555">Access</div>
<div class="t tb" style="left:363px;top:186.7px;font-size:7.6px;color:#555">2025-09-22 10:09:31</div>
<div class="t tb" style="left:648px;top:186.7px;font-size:7.6px;color:#555">ai-video-enhancer.mp4</div>
<div class="a" style="left:451.2px;top:185.1px;width:35px;height:10.2px;filter:blur(0.5px)"><i style="left:0.0px;top:0.0px;width:5px;height:5.1px;background:rgb(228,228,228)"></i><i style="left:5.0px;top:0.0px;width:5px;height:5.1px;background:rgb(225,225,225)"></i><i style="left:10.0px;top:0.0px;width:5px;height:5.1px;background:rgb(237,237,237)"></i><i style="left:15.0px;top:0.0px;width:5px;height:5.1px;background:rgb(220,220,220)"></i><i style="left:20.0px;top:0.0px;width:5px;height:5.1px;background:rgb(225,225,225)"></i><i style="left:25.0px;top:0.0px;width:5px;height:5.1px;background:rgb(231,231,231)"></i><i style="left:30.0px;top:0.0px;width:5px;height:5.1px;background:rgb(240,240,240)"></i><i style="left:0.0px;top:5.1px;width:5px;height:5.1px;background:rgb(210,210,210)"></i><i style="left:5.0px;top:5.1px;width:5px;height:5.1px;background:rgb(218,218,218)"></i><i style="left:10.0px;top:5.1px;width:5px;height:5.1px;background:rgb(222,222,222)"></i><i style="left:15.0px;top:5.1px;width:5px;height:5.1px;background:rgb(222,222,222)"></i><i style="left:20.0px;top:5.1px;width:5px;height:5.1px;background:rgb(232,232,232)"></i><i style="left:25.0px;top:5.1px;width:5px;height:5.1px;background:rgb(205,205,205)"></i><i style="left:30.0px;top:5.1px;width:5px;height:5.1px;background:rgb(205,205,205)"></i></div>
<div class="a" style="left:492.1px;top:185.1px;width:25px;height:10.2px;filter:blur(0.5px)"><i style="left:0.0px;top:0.0px;width:5px;height:5.1px;background:rgb(243,243,243)"></i><i style="left:5.0px;top:0.0px;width:5px;height:5.1px;background:rgb(243,243,243)"></i><i style="left:10.0px;top:0.0px;width:5px;height:5.1px;background:rgb(243,243,243)"></i><i style="left:15.0px;top:0.0px;width:5px;height:5.1px;background:rgb(243,243,243)"></i><i style="left:20.0px;top:0.0px;width:5px;height:5.1px;background:rgb(234,234,234)"></i><i style="left:0.0px;top:5.1px;width:5px;height:5.1px;background:rgb(205,205,205)"></i><i style="left:5.0px;top:5.1px;width:5px;height:5.1px;background:rgb(210,210,210)"></i><i style="left:10.0px;top:5.1px;width:5px;height:5.1px;background:rgb(205,205,205)"></i><i style="left:15.0px;top:5.1px;width:5px;height:5.1px;background:rgb(222,222,222)"></i><i style="left:20.0px;top:5.1px;width:5px;height:5.1px;background:rgb(218,218,218)"></i></div>
<div class="a" style="left:551.5px;top:185.3px;width:30px;height:9.8px;filter:blur(0.5px)"><i style="left:0.0px;top:0.0px;width:5px;height:4.9px;background:rgb(243,243,243)"></i><i style="left:5.0px;top:0.0px;width:5px;height:4.9px;background:rgb(228,228,228)"></i><i style="left:10.0px;top:0.0px;width:5px;height:4.9px;background:rgb(220,220,220)"></i><i style="left:15.0px;top:0.0px;width:5px;height:4.9px;background:rgb(231,231,231)"></i><i style="left:20.0px;top:0.0px;width:5px;height:4.9px;background:rgb(237,237,237)"></i><i style="left:25.0px;top:0.0px;width:5px;height:4.9px;background:rgb(228,228,228)"></i><i style="left:0.0px;top:4.9px;width:5px;height:4.9px;background:rgb(200,200,200)"></i><i style="left:5.0px;top:4.9px;width:5px;height:4.9px;background:rgb(218,218,218)"></i><i style="left:10.0px;top:4.9px;width:5px;height:4.9px;background:rgb(205,205,205)"></i><i style="left:15.0px;top:4.9px;width:5px;height:4.9px;background:rgb(218,218,218)"></i><i style="left:20.0px;top:4.9px;width:5px;height:4.9px;background:rgb(222,222,222)"></i><i style="left:25.0px;top:4.9px;width:5px;height:4.9px;background:rgb(210,210,210)"></i></div>
<div class="t tb" style="left:281.5px;top:203.3px;font-size:7.6px;color:#555">6</div>
<div class="t tb" style="left:313px;top:203.3px;font-size:7.6px;color:#555">Access</div>
<div class="t tb" style="left:363px;top:203.3px;font-size:7.6px;color:#555">2025-09-22 10:09:30</div>
<div class="t tb" style="left:648px;top:203.3px;font-size:7.6px;color:#555">ai-video-enhancer.mp4</div>
<div class="a" style="left:451.2px;top:201.7px;width:35px;height:10.2px;filter:blur(0.5px)"><i style="left:0.0px;top:0.0px;width:5px;height:5.1px;background:rgb(237,237,237)"></i><i style="left:5.0px;top:0.0px;width:5px;height:5.1px;background:rgb(231,231,231)"></i><i style="left:10.0px;top:0.0px;width:5px;height:5.1px;background:rgb(237,237,237)"></i><i style="left:15.0px;top:0.0px;width:5px;height:5.1px;background:rgb(231,231,231)"></i><i style="left:20.0px;top:0.0px;width:5px;height:5.1px;background:rgb(231,231,231)"></i><i style="left:25.0px;top:0.0px;width:5px;height:5.1px;background:rgb(231,231,231)"></i><i style="left:30.0px;top:0.0px;width:5px;height:5.1px;background:rgb(240,240,240)"></i><i style="left:0.0px;top:5.1px;width:5px;height:5.1px;background:rgb(214,214,214)"></i><i style="left:5.0px;top:5.1px;width:5px;height:5.1px;background:rgb(214,214,214)"></i><i style="left:10.0px;top:5.1px;width:5px;height:5.1px;background:rgb(232,232,232)"></i><i style="left:15.0px;top:5.1px;width:5px;height:5.1px;background:rgb(222,222,222)"></i><i style="left:20.0px;top:5.1px;width:5px;height:5.1px;background:rgb(200,200,200)"></i><i style="left:25.0px;top:5.1px;width:5px;height:5.1px;background:rgb(200,200,200)"></i><i style="left:30.0px;top:5.1px;width:5px;height:5.1px;background:rgb(218,218,218)"></i></div>
<div class="a" style="left:492.1px;top:201.7px;width:25px;height:10.2px;filter:blur(0.5px)"><i style="left:0.0px;top:0.0px;width:5px;height:5.1px;background:rgb(243,243,243)"></i><i style="left:5.0px;top:0.0px;width:5px;height:5.1px;background:rgb(234,234,234)"></i><i style="left:10.0px;top:0.0px;width:5px;height:5.1px;background:rgb(231,231,231)"></i><i style="left:15.0px;top:0.0px;width:5px;height:5.1px;background:rgb(237,237,237)"></i><i style="left:20.0px;top:0.0px;width:5px;height:5.1px;background:rgb(243,243,243)"></i><i style="left:0.0px;top:5.1px;width:5px;height:5.1px;background:rgb(222,222,222)"></i><i style="left:5.0px;top:5.1px;width:5px;height:5.1px;background:rgb(222,222,222)"></i><i style="left:10.0px;top:5.1px;width:5px;height:5.1px;background:rgb(205,205,205)"></i><i style="left:15.0px;top:5.1px;width:5px;height:5.1px;background:rgb(214,214,214)"></i><i style="left:20.0px;top:5.1px;width:5px;height:5.1px;background:rgb(205,205,205)"></i></div>
<div class="a" style="left:551.5px;top:201.9px;width:30px;height:9.8px;filter:blur(0.5px)"><i style="left:0.0px;top:0.0px;width:5px;height:4.9px;background:rgb(231,231,231)"></i><i style="left:5.0px;top:0.0px;width:5px;height:4.9px;background:rgb(243,243,243)"></i><i style="left:10.0px;top:0.0px;width:5px;height:4.9px;background:rgb(231,231,231)"></i><i style="left:15.0px;top:0.0px;width:5px;height:4.9px;background:rgb(237,237,237)"></i><i style="left:20.0px;top:0.0px;width:5px;height:4.9px;background:rgb(231,231,231)"></i><i style="left:25.0px;top:0.0px;width:5px;height:4.9px;background:rgb(243,243,243)"></i><i style="left:0.0px;top:4.9px;width:5px;height:4.9px;background:rgb(200,200,200)"></i><i style="left:5.0px;top:4.9px;width:5px;height:4.9px;background:rgb(232,232,232)"></i><i style="left:10.0px;top:4.9px;width:5px;height:4.9px;background:rgb(222,222,222)"></i><i style="left:15.0px;top:4.9px;width:5px;height:4.9px;background:rgb(205,205,205)"></i><i style="left:20.0px;top:4.9px;width:5px;height:4.9px;background:rgb(205,205,205)"></i><i style="left:25.0px;top:4.9px;width:5px;height:4.9px;background:rgb(226,226,226)"></i></div>
<div class="t tb" style="left:281.5px;top:219.9px;font-size:7.6px;color:#555">7</div>
<div class="t tb" style="left:313px;top:219.9px;font-size:7.6px;color:#555">Access</div>
<div class="t tb" style="left:363px;top:219.9px;font-size:7.6px;color:#555">2025-09-22 10:08:15</div>
<div class="t tb" style="left:648px;top:219.9px;font-size:7.6px;color:#555">ai-video-enhancer.mp4</div>
<div class="a" style="left:451.2px;top:218.3px;width:35px;height:10.2px;filter:blur(0.5px)"><i style="left:0.0px;top:0.0px;width:5px;height:5.1px;background:rgb(231,231,231)"></i><i style="left:5.0px;top:0.0px;width:5px;height:5.1px;background:rgb(243,243,243)"></i><i style="left:10.0px;top:0.0px;width:5px;height:5.1px;background:rgb(228,228,228)"></i><i style="left:15.0px;top:0.0px;width:5px;height:5.1px;background:rgb(240,240,240)"></i><i style="left:20.0px;top:0.0px;width:5px;height:5.1px;background:rgb(237,237,237)"></i><i style="left:25.0px;top:0.0px;width:5px;height:5.1px;background:rgb(225,225,225)"></i><i style="left:30.0px;top:0.0px;width:5px;height:5.1px;background:rgb(240,240,240)"></i><i style="left:0.0px;top:5.1px;width:5px;height:5.1px;background:rgb(232,232,232)"></i><i style="left:5.0px;top:5.1px;width:5px;height:5.1px;background:rgb(226,226,226)"></i><i style="left:10.0px;top:5.1px;width:5px;height:5.1px;background:rgb(205,205,205)"></i><i style="left:15.0px;top:5.1px;width:5px;height:5.1px;background:rgb(210,210,210)"></i><i style="left:20.0px;top:5.1px;width:5px;height:5.1px;background:rgb(210,210,210)"></i><i style="left:25.0px;top:5.1px;width:5px;height:5.1px;background:rgb(210,210,210)"></i><i style="left:30.0px;top:5.1px;width:5px;height:5.1px;background:rgb(200,200,200)"></i></div>
<div class="a" style="left:492.1px;top:218.3px;width:25px;height:10.2px;filter:blur(0.5px)"><i style="left:0.0px;top:0.0px;width:5px;height:5.1px;background:rgb(228,228,228)"></i><i style="left:5.0px;top:0.0px;width:5px;height:5.1px;background:rgb(243,243,243)"></i><i style="left:10.0px;top:0.0px;width:5px;height:5.1px;background:rgb(228,228,228)"></i><i style="left:15.0px;top:0.0px;width:5px;height:5.1px;background:rgb(243,243,243)"></i><i style="left:20.0px;top:0.0px;width:5px;height:5.1px;background:rgb(237,237,237)"></i><i style="left:0.0px;top:5.1px;width:5px;height:5.1px;background:rgb(210,210,210)"></i><i style="left:5.0px;top:5.1px;width:5px;height:5.1px;background:rgb(210,210,210)"></i><i style="left:10.0px;top:5.1px;width:5px;height:5.1px;background:rgb(200,200,200)"></i><i style="left:15.0px;top:5.1px;width:5px;height:5.1px;background:rgb(200,200,200)"></i><i style="left:20.0px;top:5.1px;width:5px;height:5.1px;background:rgb(205,205,205)"></i></div>
<div class="a" style="left:551.5px;top:218.5px;width:30px;height:9.8px;filter:blur(0.5px)"><i style="left:0.0px;top:0.0px;width:5px;height:4.9px;background:rgb(228,228,228)"></i><i style="left:5.0px;top:0.0px;width:5px;height:4.9px;background:rgb(240,240,240)"></i><i style="left:10.0px;top:0.0px;width:5px;height:4.9px;background:rgb(231,231,231)"></i><i style="left:15.0px;top:0.0px;width:5px;height:4.9px;background:rgb(231,231,231)"></i><i style="left:20.0px;top:0.0px;width:5px;height:4.9px;background:rgb(220,220,220)"></i><i style="left:25.0px;top:0.0px;width:5px;height:4.9px;background:rgb(234,234,234)"></i><i style="left:0.0px;top:4.9px;width:5px;height:4.9px;background:rgb(214,214,214)"></i><i style="left:5.0px;top:4.9px;width:5px;height:4.9px;background:rgb(218,218,218)"></i><i style="left:10.0px;top:4.9px;width:5px;height:4.9px;background:rgb(214,214,214)"></i><i style="left:15.0px;top:4.9px;width:5px;height:4.9px;background:rgb(222,222,222)"></i><i style="left:20.0px;top:4.9px;width:5px;height:4.9px;background:rgb(218,218,218)"></i><i style="left:25.0px;top:4.9px;width:5px;height:4.9px;background:rgb(226,226,226)"></i></div>
<div class="t tb" style="left:281.5px;top:236.5px;font-size:7.6px;color:#555">8</div>
<div class="t tb" style="left:313px;top:236.5px;font-size:7.6px;color:#555">Access</div>
<div class="t tb" style="left:363px;top:236.5px;font-size:7.6px;color:#555">2025-09-22 10:08:14</div>
<div class="t tb" style="left:648px;top:236.5px;font-size:7.6px;color:#555">ai-video-enhancer.mp4</div>
<div class="a" style="left:451.2px;top:234.9px;width:35px;height:10.2px;filter:blur(0.5px)"><i style="left:0.0px;top:0.0px;width:5px;height:5.1px;background:rgb(228,228,228)"></i><i style="left:5.0px;top:0.0px;width:5px;height:5.1px;background:rgb(220,220,220)"></i><i style="left:10.0px;top:0.0px;width:5px;height:5.1px;background:rgb(237,237,237)"></i><i style="left:15.0px;top:0.0px;width:5px;height:5.1px;background:rgb(243,243,243)"></i><i style="left:20.0px;top:0.0px;width:5px;height:5.1px;background:rgb(240,240,240)"></i><i style="left:25.0px;top:0.0px;width:5px;height:5.1px;background:rgb(228,228,228)"></i><i style="left:30.0px;top:0.0px;width:5px;height:5.1px;background:rgb(228,228,228)"></i><i style="left:0.0px;top:5.1px;width:5px;height:5.1px;background:rgb(200,200,200)"></i><i style="left:5.0px;top:5.1px;width:5px;height:5.1px;background:rgb(232,232,232)"></i><i style="left:10.0px;top:5.1px;width:5px;height:5.1px;background:rgb(210,210,210)"></i><i style="left:15.0px;top:5.1px;width:5px;height:5.1px;background:rgb(200,200,200)"></i><i style="left:20.0px;top:5.1px;width:5px;height:5.1px;background:rgb(210,210,210)"></i><i style="left:25.0px;top:5.1px;width:5px;height:5.1px;background:rgb(210,210,210)"></i><i style="left:30.0px;top:5.1px;width:5px;height:5.1px;background:rgb(210,210,210)"></i></div>
<div class="a" style="left:492.1px;top:234.9px;width:25px;height:10.2px;filter:blur(0.5px)"><i style="left:0.0px;top:0.0px;width:5px;height:5.1px;background:rgb(243,243,243)"></i><i style="left:5.0px;top:0.0px;width:5px;height:5.1px;background:rgb(225,225,225)"></i><i style="left:10.0px;top:0.0px;width:5px;height:5.1px;background:rgb(220,220,220)"></i><i style="left:15.0px;top:0.0px;width:5px;height:5.1px;background:rgb(237,237,237)"></i><i style="left:20.0px;top:0.0px;width:5px;height:5.1px;background:rgb(243,243,243)"></i><i style="left:0.0px;top:5.1px;width:5px;height:5.1px;background:rgb(205,205,205)"></i><i style="left:5.0px;top:5.1px;width:5px;height:5.1px;background:rgb(200,200,200)"></i><i style="left:10.0px;top:5.1px;width:5px;height:5.1px;background:rgb(214,214,214)"></i><i style="left:15.0px;top:5.1px;width:5px;height:5.1px;background:rgb(214,214,214)"></i><i style="left:20.0px;top:5.1px;width:5px;height:5.1px;background:rgb(218,218,218)"></i></div>
<div class="a" style="left:551.5px;top:235.1px;width:30px;height:9.8px;filter:blur(0.5px)"><i style="left:0.0px;top:0.0px;width:5px;height:4.9px;background:rgb(220,220,220)"></i><i style="left:5.0px;top:0.0px;width:5px;height:4.9px;background:rgb(225,225,225)"></i><i style="left:10.0px;top:0.0px;width:5px;height:4.9px;background:rgb(243,243,243)"></i><i style="left:15.0px;top:0.0px;width:5px;height:4.9px;background:rgb(220,220,220)"></i><i style="left:20.0px;top:0.0px;width:5px;height:4.9px;background:rgb(225,225,225)"></i><i style="left:25.0px;top:0.0px;width:5px;height:4.9px;background:rgb(243,243,243)"></i><i style="left:0.0px;top:4.9px;width:5px;height:4.9px;background:rgb(222,222,222)"></i><i style="left:5.0px;top:4.9px;width:5px;height:4.9px;background:rgb(214,214,214)"></i><i style="left:10.0px;top:4.9px;width:5px;height:4.9px;background:rgb(218,218,218)"></i><i style="left:15.0px;top:4.9px;width:5px;height:4.9px;background:rgb(232,232,232)"></i><i style="left:20.0px;top:4.9px;width:5px;height:4.9px;background:rgb(232,232,232)"></i><i style="left:25.0px;top:4.9px;width:5px;height:4.9px;background:rgb(214,214,214)"></i></div>
<div class="t tb" style="left:281.5px;top:253.1px;font-size:7.6px;color:#555">9</div>
<div class="t tb" style="left:313px;top:253.1px;font-size:7.6px;color:#555">Access</div>
<div class="t tb" style="left:363px;top:253.1px;font-size:7.6px;color:#555">2025-09-22 10:07:23</div>
<div class="t tb" style="left:648px;top:253.1px;font-size:7.6px;color:#555">ai-video-enhancer.mp4</div>
<div class="a" style="left:451.2px;top:251.5px;width:35px;height:10.2px;filter:blur(0.5px)"><i style="left:0.0px;top:0.0px;width:5px;height:5.1px;background:rgb(234,234,234)"></i><i style="left:5.0px;top:0.0px;width:5px;height:5.1px;background:rgb(231,231,231)"></i><i style="left:10.0px;top:0.0px;width:5px;height:5.1px;background:rgb(243,243,243)"></i><i style="left:15.0px;top:0.0px;width:5px;height:5.1px;background:rgb(228,228,228)"></i><i style="left:20.0px;top:0.0px;width:5px;height:5.1px;background:rgb(240,240,240)"></i><i style="left:25.0px;top:0.0px;width:5px;height:5.1px;background:rgb(225,225,225)"></i><i style="left:30.0px;top:0.0px;width:5px;height:5.1px;background:rgb(240,240,240)"></i><i style="left:0.0px;top:5.1px;width:5px;height:5.1px;background:rgb(232,232,232)"></i><i style="left:5.0px;top:5.1px;width:5px;height:5.1px;background:rgb(222,222,222)"></i><i style="left:10.0px;top:5.1px;width:5px;height:5.1px;background:rgb(205,205,205)"></i><i style="left:15.0px;top:5.1px;width:5px;height:5.1px;background:rgb(214,214,214)"></i><i style="left:20.0px;top:5.1px;width:5px;height:5.1px;background:rgb(226,226,226)"></i><i style="left:25.0px;top:5.1px;width:5px;height:5.1px;background:rgb(205,205,205)"></i><i style="left:30.0px;top:5.1px;width:5px;height:5.1px;background:rgb(214,214,214)"></i></div>
<div class="a" style="left:492.1px;top:251.5px;width:25px;height:10.2px;filter:blur(0.5px)"><i style="left:0.0px;top:0.0px;width:5px;height:5.1px;background:rgb(234,234,234)"></i><i style="left:5.0px;top:0.0px;width:5px;height:5.1px;background:rgb(225,225,225)"></i><i style="left:10.0px;top:0.0px;width:5px;height:5.1px;background:rgb(228,228,228)"></i><i style="left:15.0px;top:0.0px;width:5px;height:5.1px;background:rgb(237,237,237)"></i><i style="left:20.0px;top:0.0px;width:5px;height:5.1px;background:rgb(228,228,228)"></i><i style="left:0.0px;top:5.1px;width:5px;height:5.1px;background:rgb(218,218,218)"></i><i style="left:5.0px;top:5.1px;width:5px;height:5.1px;background:rgb(210,210,210)"></i><i style="left:10.0px;top:5.1px;width:5px;height:5.1px;background:rgb(232,232,232)"></i><i style="left:15.0px;top:5.1px;width:5px;height:5.1px;background:rgb(214,214,214)"></i><i style="left:20.0px;top:5.1px;width:5px;height:5.1px;background:rgb(205,205,205)"></i></div>
<div class="a" style="left:551.5px;top:251.7px;width:30px;height:9.8px;filter:blur(0.5px)"><i style="left:0.0px;top:0.0px;width:5px;height:4.9px;background:rgb(240,240,240)"></i><i style="left:5.0px;top:0.0px;width:5px;height:4.9px;background:rgb(243,243,243)"></i><i style="left:10.0px;top:0.0px;width:5px;height:4.9px;background:rgb(228,228,228)"></i><i style="left:15.0px;top:0.0px;width:5px;height:4.9px;background:rgb(231,231,231)"></i><i style="left:20.0px;top:0.0px;width:5px;height:4.9px;background:rgb(228,228,228)"></i><i style="left:25.0px;top:0.0px;width:5px;height:4.9px;background:rgb(240,240,240)"></i><i style="left:0.0px;top:4.9px;width:5px;height:4.9px;background:rgb(226,226,226)"></i><i style="left:5.0px;top:4.9px;width:5px;height:4.9px;background:rgb(222,222,222)"></i><i style="left:10.0px;top:4.9px;width:5px;height:4.9px;background:rgb(226,226,226)"></i><i style="left:15.0px;top:4.9px;width:5px;height:4.9px;background:rgb(214,214,214)"></i><i style="left:20.0px;top:4.9px;width:5px;height:4.9px;background:rgb(222,222,222)"></i><i style="left:25.0px;top:4.9px;width:5px;height:4.9px;background:rgb(222,222,222)"></i></div>
<div class="t tb" style="left:281.5px;top:269.7px;font-size:7.6px;color:#555">10</div>
<div class="t tb" style="left:313px;top:269.7px;font-size:7.6px;color:#555">Access</div>
<div class="t tb" style="left:363px;top:269.7px;font-size:7.6px;color:#555">2025-09-22 10:07:22</div>
<div class="t tb" style="left:648px;top:269.7px;font-size:7.6px;color:#555">ai-video-enhancer.mp4</div>
<div class="a" style="left:451.2px;top:268.1px;width:35px;height:10.2px;filter:blur(0.5px)"><i style="left:0.0px;top:0.0px;width:5px;height:5.1px;background:rgb(225,225,225)"></i><i style="left:5.0px;top:0.0px;width:5px;height:5.1px;background:rgb(237,237,237)"></i><i style="left:10.0px;top:0.0px;width:5px;height:5.1px;background:rgb(220,220,220)"></i><i style="left:15.0px;top:0.0px;width:5px;height:5.1px;background:rgb(237,237,237)"></i><i style="left:20.0px;top:0.0px;width:5px;height:5.1px;background:rgb(243,243,243)"></i><i style="left:25.0px;top:0.0px;width:5px;height:5.1px;background:rgb(243,243,243)"></i><i style="left:30.0px;top:0.0px;width:5px;height:5.1px;background:rgb(220,220,220)"></i><i style="left:0.0px;top:5.1px;width:5px;height:5.1px;background:rgb(226,226,226)"></i><i style="left:5.0px;top:5.1px;width:5px;height:5.1px;background:rgb(222,222,222)"></i><i style="left:10.0px;top:5.1px;width:5px;height:5.1px;background:rgb(218,218,218)"></i><i style="left:15.0px;top:5.1px;width:5px;height:5.1px;background:rgb(205,205,205)"></i><i style="left:20.0px;top:5.1px;width:5px;height:5.1px;background:rgb(205,205,205)"></i><i style="left:25.0px;top:5.1px;width:5px;height:5.1px;background:rgb(214,214,214)"></i><i style="left:30.0px;top:5.1px;width:5px;height:5.1px;background:rgb(205,205,205)"></i></div>
<div class="a" style="left:492.1px;top:268.1px;width:25px;height:10.2px;filter:blur(0.5px)"><i style="left:0.0px;top:0.0px;width:5px;height:5.1px;background:rgb(225,225,225)"></i><i style="left:5.0px;top:0.0px;width:5px;height:5.1px;background:rgb(234,234,234)"></i><i style="left:10.0px;top:0.0px;width:5px;height:5.1px;background:rgb(234,234,234)"></i><i style="left:15.0px;top:0.0px;width:5px;height:5.1px;background:rgb(220,220,220)"></i><i style="left:20.0px;top:0.0px;width:5px;height:5.1px;background:rgb(228,228,228)"></i><i style="left:0.0px;top:5.1px;width:5px;height:5.1px;background:rgb(218,218,218)"></i><i style="left:5.0px;top:5.1px;width:5px;height:5.1px;background:rgb(210,210,210)"></i><i style="left:10.0px;top:5.1px;width:5px;height:5.1px;background:rgb(226,226,226)"></i><i style="left:15.0px;top:5.1px;width:5px;height:5.1px;background:rgb(218,218,218)"></i><i style="left:20.0px;top:5.1px;width:5px;height:5.1px;background:rgb(226,226,226)"></i></div>
<div class="a" style="left:551.5px;top:268.3px;width:30px;height:9.8px;filter:blur(0.5px)"><i style="left:0.0px;top:0.0px;width:5px;height:4.9px;background:rgb(228,228,228)"></i><i style="left:5.0px;top:0.0px;width:5px;height:4.9px;background:rgb(243,243,243)"></i><i style="left:10.0px;top:0.0px;width:5px;height:4.9px;background:rgb(237,237,237)"></i><i style="left:15.0px;top:0.0px;width:5px;height:4.9px;background:rgb(225,225,225)"></i><i style="left:20.0px;top:0.0px;width:5px;height:4.9px;background:rgb(234,234,234)"></i><i style="left:25.0px;top:0.0px;width:5px;height:4.9px;background:rgb(220,220,220)"></i><i style="left:0.0px;top:4.9px;width:5px;height:4.9px;background:rgb(210,210,210)"></i><i style="left:5.0px;top:4.9px;width:5px;height:4.9px;background:rgb(226,226,226)"></i><i style="left:10.0px;top:4.9px;width:5px;height:4.9px;background:rgb(205,205,205)"></i><i style="left:15.0px;top:4.9px;width:5px;height:4.9px;background:rgb(218,218,218)"></i><i style="left:20.0px;top:4.9px;width:5px;height:4.9px;background:rgb(200,200,200)"></i><i style="left:25.0px;top:4.9px;width:5px;height:4.9px;background:rgb(205,205,205)"></i></div>
<div class="t tb" style="left:281.5px;top:286.3px;font-size:7.6px;color:#555">11</div>
<div class="t tb" style="left:313px;top:286.3px;font-size:7.6px;color:#555">Access</div>
<div class="t tb" style="left:363px;top:286.3px;font-size:7.6px;color:#555">2025-09-22 10:07:22</div>
<div class="t tb" style="left:648px;top:286.3px;font-size:7.6px;color:#555">ai-video-enhancer.mp4</div>
<div class="a" style="left:451.2px;top:284.7px;width:35px;height:10.2px;filter:blur(0.5px)"><i style="left:0.0px;top:0.0px;width:5px;height:5.1px;background:rgb(234,234,234)"></i><i style="left:5.0px;top:0.0px;width:5px;height:5.1px;background:rgb(225,225,225)"></i><i style="left:10.0px;top:0.0px;width:5px;height:5.1px;background:rgb(231,231,231)"></i><i style="left:15.0px;top:0.0px;width:5px;height:5.1px;background:rgb(225,225,225)"></i><i style="left:20.0px;top:0.0px;width:5px;height:5.1px;background:rgb(234,234,234)"></i><i style="left:25.0px;top:0.0px;width:5px;height:5.1px;background:rgb(225,225,225)"></i><i style="left:30.0px;top:0.0px;width:5px;height:5.1px;background:rgb(243,243,243)"></i><i style="left:0.0px;top:5.1px;width:5px;height:5.1px;background:rgb(200,200,200)"></i><i style="left:5.0px;top:5.1px;width:5px;height:5.1px;background:rgb(222,222,222)"></i><i style="left:10.0px;top:5.1px;width:5px;height:5.1px;background:rgb(226,226,226)"></i><i style="left:15.0px;top:5.1px;width:5px;height:5.1px;background:rgb(218,218,218)"></i><i style="left:20.0px;top:5.1px;width:5px;height:5.1px;background:rgb(210,210,210)"></i><i style="left:25.0px;top:5.1px;width:5px;height:5.1px;background:rgb(200,200,200)"></i><i style="left:30.0px;top:5.1px;width:5px;height:5.1px;background:rgb(214,214,214)"></i></div>
<div class="a" style="left:492.1px;top:284.7px;width:25px;height:10.2px;filter:blur(0.5px)"><i style="left:0.0px;top:0.0px;width:5px;height:5.1px;background:rgb(225,225,225)"></i><i style="left:5.0px;top:0.0px;width:5px;height:5.1px;background:rgb(228,228,228)"></i><i style="left:10.0px;top:0.0px;width:5px;height:5.1px;background:rgb(234,234,234)"></i><i style="left:15.0px;top:0.0px;width:5px;height:5.1px;background:rgb(220,220,220)"></i><i style="left:20.0px;top:0.0px;width:5px;height:5.1px;background:rgb(228,228,228)"></i><i style="left:0.0px;top:5.1px;width:5px;height:5.1px;background:rgb(214,214,214)"></i><i style="left:5.0px;top:5.1px;width:5px;height:5.1px;background:rgb(218,218,218)"></i><i style="left:10.0px;top:5.1px;width:5px;height:5.1px;background:rgb(218,218,218)"></i><i style="left:15.0px;top:5.1px;width:5px;height:5.1px;background:rgb(214,214,214)"></i><i style="left:20.0px;top:5.1px;width:5px;height:5.1px;background:rgb(218,218,218)"></i></div>
<div class="a" style="left:551.5px;top:284.9px;width:30px;height:9.8px;filter:blur(0.5px)"><i style="left:0.0px;top:0.0px;width:5px;height:4.9px;background:rgb(243,243,243)"></i><i style="left:5.0px;top:0.0px;width:5px;height:4.9px;background:rgb(228,228,228)"></i><i style="left:10.0px;top:0.0px;width:5px;height:4.9px;background:rgb(234,234,234)"></i><i style="left:15.0px;top:0.0px;width:5px;height:4.9px;background:rgb(237,237,237)"></i><i style="left:20.0px;top:0.0px;width:5px;height:4.9px;background:rgb(220,220,220)"></i><i style="left:25.0px;top:0.0px;width:5px;height:4.9px;background:rgb(234,234,234)"></i><i style="left:0.0px;top:4.9px;width:5px;height:4.9px;background:rgb(200,200,200)"></i><i style="left:5.0px;top:4.9px;width:5px;height:4.9px;background:rgb(200,200,200)"></i><i style="left:10.0px;top:4.9px;width:5px;height:4.9px;background:rgb(200,200,200)"></i><i style="left:15.0px;top:4.9px;width:5px;height:4.9px;background:rgb(214,214,214)"></i><i style="left:20.0px;top:4.9px;width:5px;height:4.9px;background:rgb(232,232,232)"></i><i style="left:25.0px;top:4.9px;width:5px;height:4.9px;background:rgb(214,214,214)"></i></div>
<div class="t tb" style="left:281.5px;top:302.9px;font-size:7.6px;color:#555">12</div>
<div class="t tb" style="left:313px;top:302.9px;font-size:7.6px;color:#555">Access</div>
<div class="t tb" style="left:363px;top:302.9px;font-size:7.6px;color:#555">2025-09-22 10:06:57</div>
<div class="t tb" style="left:648px;top:302.9px;font-size:7.6px;color:#555">ai-video-enhancer.mp4</div>
<div class="a" style="left:451.2px;top:301.3px;width:35px;height:10.2px;filter:blur(0.5px)"><i style="left:0.0px;top:0.0px;width:5px;height:5.1px;background:rgb(243,243,243)"></i><i style="left:5.0px;top:0.0px;width:5px;height:5.1px;background:rgb(225,225,225)"></i><i style="left:10.0px;top:0.0px;width:5px;height:5.1px;background:rgb(240,240,240)"></i><i style="left:15.0px;top:0.0px;width:5px;height:5.1px;background:rgb(243,243,243)"></i><i style="left:20.0px;top:0.0px;width:5px;height:5.1px;background:rgb(240,240,240)"></i><i style="left:25.0px;top:0.0px;width:5px;height:5.1px;background:rgb(234,234,234)"></i><i style="left:30.0px;top:0.0px;width:5px;height:5.1px;background:rgb(231,231,231)"></i><i style="left:0.0px;top:5.1px;width:5px;height:5.1px;background:rgb(214,214,214)"></i><i style="left:5.0px;top:5.1px;width:5px;height:5.1px;background:rgb(222,222,222)"></i><i style="left:10.0px;top:5.1px;width:5px;height:5.1px;background:rgb(214,214,214)"></i><i style="left:15.0px;top:5.1px;width:5px;height:5.1px;background:rgb(210,210,210)"></i><i style="left:20.0px;top:5.1px;width:5px;height:5.1px;background:rgb(226,226,226)"></i><i style="left:25.0px;top:5.1px;width:5px;height:5.1px;background:rgb(222,222,222)"></i><i style="left:30.0px;top:5.1px;width:5px;height:5.1px;background:rgb(200,200,200)"></i></div>
<div class="a" style="left:492.1px;top:301.3px;width:25px;height:10.2px;filter:blur(0.5px)"><i style="left:0.0px;top:0.0px;width:5px;height:5.1px;background:rgb(228,228,228)"></i><i style="left:5.0px;top:0.0px;width:5px;height:5.1px;background:rgb(220,220,220)"></i><i style="left:10.0px;top:0.0px;width:5px;height:5.1px;background:rgb(225,225,225)"></i><i style="left:15.0px;top:0.0px;width:5px;height:5.1px;background:rgb(234,234,234)"></i><i style="left:20.0px;top:0.0px;width:5px;height:5.1px;background:rgb(240,240,240)"></i><i style="left:0.0px;top:5.1px;width:5px;height:5.1px;background:rgb(210,210,210)"></i><i style="left:5.0px;top:5.1px;width:5px;height:5.1px;background:rgb(200,200,200)"></i><i style="left:10.0px;top:5.1px;width:5px;height:5.1px;background:rgb(205,205,205)"></i><i style="left:15.0px;top:5.1px;width:5px;height:5.1px;background:rgb(226,226,226)"></i><i style="left:20.0px;top:5.1px;width:5px;height:5.1px;background:rgb(218,218,218)"></i></div>
<div class="a" style="left:551.5px;top:301.5px;width:30px;height:9.8px;filter:blur(0.5px)"><i style="left:0.0px;top:0.0px;width:5px;height:4.9px;background:rgb(231,231,231)"></i><i style="left:5.0px;top:0.0px;width:5px;height:4.9px;background:rgb(234,234,234)"></i><i style="left:10.0px;top:0.0px;width:5px;height:4.9px;background:rgb(220,220,220)"></i><i style="left:15.0px;top:0.0px;width:5px;height:4.9px;background:rgb(243,243,243)"></i><i style="left:20.0px;top:0.0px;width:5px;height:4.9px;background:rgb(228,228,228)"></i><i style="left:25.0px;top:0.0px;width:5px;height:4.9px;background:rgb(228,228,228)"></i><i style="left:0.0px;top:4.9px;width:5px;height:4.9px;background:rgb(218,218,218)"></i><i style="left:5.0px;top:4.9px;width:5px;height:4.9px;background:rgb(232,232,232)"></i><i style="left:10.0px;top:4.9px;width:5px;height:4.9px;background:rgb(200,200,200)"></i><i style="left:15.0px;top:4.9px;width:5px;height:4.9px;background:rgb(218,218,218)"></i><i style="left:20.0px;top:4.9px;width:5px;height:4.9px;background:rgb(222,222,222)"></i><i style="left:25.0px;top:4.9px;width:5px;height:4.9px;background:rgb(222,222,222)"></i></div>
<div class="t tb" style="left:281.5px;top:319.5px;font-size:7.6px;color:#555">13</div>
<div class="t tb" style="left:313px;top:319.5px;font-size:7.6px;color:#555">Access</div>
<div class="t tb" style="left:363px;top:319.5px;font-size:7.6px;color:#555">2025-09-22 10:06:57</div>
<div class="t tb" style="left:648px;top:319.5px;font-size:7.6px;color:#555">ai-video-enhancer.mp4</div>
<div class="a" style="left:451.2px;top:317.9px;width:35px;height:10.2px;filter:blur(0.5px)"><i style="left:0.0px;top:0.0px;width:5px;height:5.1px;background:rgb(237,237,237)"></i><i style="left:5.0px;top:0.0px;width:5px;height:5.1px;background:rgb(231,231,231)"></i><i style="left:10.0px;top:0.0px;width:5px;height:5.1px;background:rgb(220,220,220)"></i><i style="left:15.0px;top:0.0px;width:5px;height:5.1px;background:rgb(234,234,234)"></i><i style="left:20.0px;top:0.0px;width:5px;height:5.1px;background:rgb(231,231,231)"></i><i style="left:25.0px;top:0.0px;width:5px;height:5.1px;background:rgb(237,237,237)"></i><i style="left:30.0px;top:0.0px;width:5px;height:5.1px;background:rgb(228,228,228)"></i><i style="left:0.0px;top:5.1px;width:5px;height:5.1px;background:rgb(200,200,200)"></i><i style="left:5.0px;top:5.1px;width:5px;height:5.1px;background:rgb(222,222,222)"></i><i style="left:10.0px;top:5.1px;width:5px;height:5.1px;background:rgb(226,226,226)"></i><i style="left:15.0px;top:5.1px;width:5px;height:5.1px;background:rgb(205,205,205)"></i><i style="left:20.0px;top:5.1px;width:5px;height:5.1px;background:rgb(232,232,232)"></i><i style="left:25.0px;top:5.1px;width:5px;height:5.1px;background:rgb(218,218,218)"></i><i style="left:30.0px;top:5.1px;width:5px;height:5.1px;background:rgb(214,214,214)"></i></div>
<div class="a" style="left:492.1px;top:317.9px;width:25px;height:10.2px;filter:blur(0.5px)"><i style="left:0.0px;top:0.0px;width:5px;height:5.1px;background:rgb(231,231,231)"></i><i style="left:5.0px;top:0.0px;width:5px;height:5.1px;background:rgb(220,220,220)"></i><i style="left:10.0px;top:0.0px;width:5px;height:5.1px;background:rgb(225,225,225)"></i><i style="left:15.0px;top:0.0px;width:5px;height:5.1px;background:rgb(234,234,234)"></i><i style="left:20.0px;top:0.0px;width:5px;height:5.1px;background:rgb(225,225,225)"></i><i style="left:0.0px;top:5.1px;width:5px;height:5.1px;background:rgb(210,210,210)"></i><i style="left:5.0px;top:5.1px;width:5px;height:5.1px;background:rgb(226,226,226)"></i><i style="left:10.0px;top:5.1px;width:5px;height:5.1px;background:rgb(200,200,200)"></i><i style="left:15.0px;top:5.1px;width:5px;height:5.1px;background:rgb(226,226,226)"></i><i style="left:20.0px;top:5.1px;width:5px;height:5.1px;background:rgb(200,200,200)"></i></div>
<div class="a" style="left:551.5px;top:318.1px;width:30px;height:9.8px;filter:blur(0.5px)"><i style="left:0.0px;top:0.0px;width:5px;height:4.9px;background:rgb(234,234,234)"></i><i style="left:5.0px;top:0.0px;width:5px;height:4.9px;background:rgb(234,234,234)"></i><i style="left:10.0px;top:0.0px;width:5px;height:4.9px;background:rgb(231,231,231)"></i><i style="left:15.0px;top:0.0px;width:5px;height:4.9px;background:rgb(225,225,225)"></i><i style="left:20.0px;top:0.0px;width:5px;height:4.9px;background:rgb(228,228,228)"></i><i style="left:25.0px;top:0.0px;width:5px;height:4.9px;background:rgb(240,240,240)"></i><i style="left:0.0px;top:4.9px;width:5px;height:4.9px;background:rgb(222,222,222)"></i><i style="left:5.0px;top:4.9px;width:5px;height:4.9px;background:rgb(232,232,232)"></i><i style="left:10.0px;top:4.9px;width:5px;height:4.9px;background:rgb(210,210,210)"></i><i style="left:15.0px;top:4.9px;width:5px;height:4.9px;background:rgb(218,218,218)"></i><i style="left:20.0px;top:4.9px;width:5px;height:4.9px;background:rgb(210,210,210)"></i><i style="left:25.0px;top:4.9px;width:5px;height:4.9px;background:rgb(200,200,200)"></i></div>
<div class="t tb" style="left:281.5px;top:336.1px;font-size:7.6px;color:#555">14</div>
<div class="t tb" style="left:313px;top:336.1px;font-size:7.6px;color:#555">Rename</div>
<div class="t tb" style="left:363px;top:336.1px;font-size:7.6px;color:#555">2025-09-22 10:06:17</div>
<div class="t tb" style="left:648px;top:336.1px;font-size:7.6px;color:#555">Part #1.mp4</div>
<div class="a" style="left:451.2px;top:334.5px;width:35px;height:10.2px;filter:blur(0.5px)"><i style="left:0.0px;top:0.0px;width:5px;height:5.1px;background:rgb(240,240,240)"></i><i style="left:5.0px;top:0.0px;width:5px;height:5.1px;background:rgb(228,228,228)"></i><i style="left:10.0px;top:0.0px;width:5px;height:5.1px;background:rgb(220,220,220)"></i><i style="left:15.0px;top:0.0px;width:5px;height:5.1px;background:rgb(231,231,231)"></i><i style="left:20.0px;top:0.0px;width:5px;height:5.1px;background:rgb(225,225,225)"></i><i style="left:25.0px;top:0.0px;width:5px;height:5.1px;background:rgb(220,220,220)"></i><i style="left:30.0px;top:0.0px;width:5px;height:5.1px;background:rgb(220,220,220)"></i><i style="left:0.0px;top:5.1px;width:5px;height:5.1px;background:rgb(210,210,210)"></i><i style="left:5.0px;top:5.1px;width:5px;height:5.1px;background:rgb(222,222,222)"></i><i style="left:10.0px;top:5.1px;width:5px;height:5.1px;background:rgb(205,205,205)"></i><i style="left:15.0px;top:5.1px;width:5px;height:5.1px;background:rgb(226,226,226)"></i><i style="left:20.0px;top:5.1px;width:5px;height:5.1px;background:rgb(232,232,232)"></i><i style="left:25.0px;top:5.1px;width:5px;height:5.1px;background:rgb(200,200,200)"></i><i style="left:30.0px;top:5.1px;width:5px;height:5.1px;background:rgb(200,200,200)"></i></div>
<div class="a" style="left:492.1px;top:334.5px;width:25px;height:10.2px;filter:blur(0.5px)"><i style="left:0.0px;top:0.0px;width:5px;height:5.1px;background:rgb(231,231,231)"></i><i style="left:5.0px;top:0.0px;width:5px;height:5.1px;background:rgb(243,243,243)"></i><i style="left:10.0px;top:0.0px;width:5px;height:5.1px;background:rgb(234,234,234)"></i><i style="left:15.0px;top:0.0px;width:5px;height:5.1px;background:rgb(220,220,220)"></i><i style="left:20.0px;top:0.0px;width:5px;height:5.1px;background:rgb(243,243,243)"></i><i style="left:0.0px;top:5.1px;width:5px;height:5.1px;background:rgb(205,205,205)"></i><i style="left:5.0px;top:5.1px;width:5px;height:5.1px;background:rgb(205,205,205)"></i><i style="left:10.0px;top:5.1px;width:5px;height:5.1px;background:rgb(205,205,205)"></i><i style="left:15.0px;top:5.1px;width:5px;height:5.1px;background:rgb(232,232,232)"></i><i style="left:20.0px;top:5.1px;width:5px;height:5.1px;background:rgb(218,218,218)"></i></div>
<div class="a" style="left:551.5px;top:334.7px;width:30px;height:9.8px;filter:blur(0.5px)"><i style="left:0.0px;top:0.0px;width:5px;height:4.9px;background:rgb(225,225,225)"></i><i style="left:5.0px;top:0.0px;width:5px;height:4.9px;background:rgb(234,234,234)"></i><i style="left:10.0px;top:0.0px;width:5px;height:4.9px;background:rgb(231,231,231)"></i><i style="left:15.0px;top:0.0px;width:5px;height:4.9px;background:rgb(231,231,231)"></i><i style="left:20.0px;top:0.0px;width:5px;height:4.9px;background:rgb(231,231,231)"></i><i style="left:25.0px;top:0.0px;width:5px;height:4.9px;background:rgb(243,243,243)"></i><i style="left:0.0px;top:4.9px;width:5px;height:4.9px;background:rgb(232,232,232)"></i><i style="left:5.0px;top:4.9px;width:5px;height:4.9px;background:rgb(226,226,226)"></i><i style="left:10.0px;top:4.9px;width:5px;height:4.9px;background:rgb(205,205,205)"></i><i style="left:15.0px;top:4.9px;width:5px;height:4.9px;background:rgb(232,232,232)"></i><i style="left:20.0px;top:4.9px;width:5px;height:4.9px;background:rgb(218,218,218)"></i><i style="left:25.0px;top:4.9px;width:5px;height:4.9px;background:rgb(200,200,200)"></i></div>
<div class="t tb" style="left:281.5px;top:352.7px;font-size:7.6px;color:#555">15</div>
<div class="t tb" style="left:313px;top:352.7px;font-size:7.6px;color:#555">Copy</div>
<div class="t tb" style="left:363px;top:352.7px;font-size:7.6px;color:#555">2025-09-22 10:06:00</div>
<div class="t tb" style="left:648px;top:352.7px;font-size:7.6px;color:#555">Part #1.mp4</div>
<div class="a" style="left:451.2px;top:351.1px;width:35px;height:10.2px;filter:blur(0.5px)"><i style="left:0.0px;top:0.0px;width:5px;height:5.1px;background:rgb(231,231,231)"></i><i style="left:5.0px;top:0.0px;width:5px;height:5.1px;background:rgb(225,225,225)"></i><i style="left:10.0px;top:0.0px;width:5px;height:5.1px;background:rgb(228,228,228)"></i><i style="left:15.0px;top:0.0px;width:5px;height:5.1px;background:rgb(237,237,237)"></i><i style="left:20.0px;top:0.0px;width:5px;height:5.1px;background:rgb(234,234,234)"></i><i style="left:25.0px;top:0.0px;width:5px;height:5.1px;background:rgb(234,234,234)"></i><i style="left:30.0px;top:0.0px;width:5px;height:5.1px;background:rgb(228,228,228)"></i><i style="left:0.0px;top:5.1px;width:5px;height:5.1px;background:rgb(200,200,200)"></i><i style="left:5.0px;top:5.1px;width:5px;height:5.1px;background:rgb(232,232,232)"></i><i style="left:10.0px;top:5.1px;width:5px;height:5.1px;background:rgb(200,200,200)"></i><i style="left:15.0px;top:5.1px;width:5px;height:5.1px;background:rgb(232,232,232)"></i><i style="left:20.0px;top:5.1px;width:5px;height:5.1px;background:rgb(218,218,218)"></i><i style="left:25.0px;top:5.1px;width:5px;height:5.1px;background:rgb(205,205,205)"></i><i style="left:30.0px;top:5.1px;width:5px;height:5.1px;background:rgb(214,214,214)"></i></div>
<div class="a" style="left:492.1px;top:351.1px;width:25px;height:10.2px;filter:blur(0.5px)"><i style="left:0.0px;top:0.0px;width:5px;height:5.1px;background:rgb(243,243,243)"></i><i style="left:5.0px;top:0.0px;width:5px;height:5.1px;background:rgb(234,234,234)"></i><i style="left:10.0px;top:0.0px;width:5px;height:5.1px;background:rgb(234,234,234)"></i><i style="left:15.0px;top:0.0px;width:5px;height:5.1px;background:rgb(243,243,243)"></i><i style="left:20.0px;top:0.0px;width:5px;height:5.1px;background:rgb(243,243,243)"></i><i style="left:0.0px;top:5.1px;width:5px;height:5.1px;background:rgb(232,232,232)"></i><i style="left:5.0px;top:5.1px;width:5px;height:5.1px;background:rgb(205,205,205)"></i><i style="left:10.0px;top:5.1px;width:5px;height:5.1px;background:rgb(214,214,214)"></i><i style="left:15.0px;top:5.1px;width:5px;height:5.1px;background:rgb(218,218,218)"></i><i style="left:20.0px;top:5.1px;width:5px;height:5.1px;background:rgb(205,205,205)"></i></div>
<div class="a" style="left:551.5px;top:351.3px;width:30px;height:9.8px;filter:blur(0.5px)"><i style="left:0.0px;top:0.0px;width:5px;height:4.9px;background:rgb(243,243,243)"></i><i style="left:5.0px;top:0.0px;width:5px;height:4.9px;background:rgb(220,220,220)"></i><i style="left:10.0px;top:0.0px;width:5px;height:4.9px;background:rgb(234,234,234)"></i><i style="left:15.0px;top:0.0px;width:5px;height:4.9px;background:rgb(243,243,243)"></i><i style="left:20.0px;top:0.0px;width:5px;height:4.9px;background:rgb(225,225,225)"></i><i style="left:25.0px;top:0.0px;width:5px;height:4.9px;background:rgb(243,243,243)"></i><i style="left:0.0px;top:4.9px;width:5px;height:4.9px;background:rgb(218,218,218)"></i><i style="left:5.0px;top:4.9px;width:5px;height:4.9px;background:rgb(226,226,226)"></i><i style="left:10.0px;top:4.9px;width:5px;height:4.9px;background:rgb(214,214,214)"></i><i style="left:15.0px;top:4.9px;width:5px;height:4.9px;background:rgb(214,214,214)"></i><i style="left:20.0px;top:4.9px;width:5px;height:4.9px;background:rgb(205,205,205)"></i><i style="left:25.0px;top:4.9px;width:5px;height:4.9px;background:rgb(205,205,205)"></i></div>
<div class="t tb" style="left:281.5px;top:369.3px;font-size:7.6px;color:#555">16</div>
<div class="t tb" style="left:313px;top:369.3px;font-size:7.6px;color:#555">Delete</div>
<div class="t tb" style="left:363px;top:369.3px;font-size:7.6px;color:#555">2025-09-22 10:05:55</div>
<div class="t tb" style="left:648px;top:369.3px;font-size:7.6px;color:#555">ai-video-enhancer.mp4</div>
<div class="a" style="left:451.2px;top:367.7px;width:35px;height:10.2px;filter:blur(0.5px)"><i style="left:0.0px;top:0.0px;width:5px;height:5.1px;background:rgb(228,228,228)"></i><i style="left:5.0px;top:0.0px;width:5px;height:5.1px;background:rgb(234,234,234)"></i><i style="left:10.0px;top:0.0px;width:5px;height:5.1px;background:rgb(237,237,237)"></i><i style="left:15.0px;top:0.0px;width:5px;height:5.1px;background:rgb(228,228,228)"></i><i style="left:20.0px;top:0.0px;width:5px;height:5.1px;background:rgb(234,234,234)"></i><i style="left:25.0px;top:0.0px;width:5px;height:5.1px;background:rgb(225,225,225)"></i><i style="left:30.0px;top:0.0px;width:5px;height:5.1px;background:rgb(237,237,237)"></i><i style="left:0.0px;top:5.1px;width:5px;height:5.1px;background:rgb(214,214,214)"></i><i style="left:5.0px;top:5.1px;width:5px;height:5.1px;background:rgb(232,232,232)"></i><i style="left:10.0px;top:5.1px;width:5px;height:5.1px;background:rgb(232,232,232)"></i><i style="left:15.0px;top:5.1px;width:5px;height:5.1px;background:rgb(226,226,226)"></i><i style="left:20.0px;top:5.1px;width:5px;height:5.1px;background:rgb(200,200,200)"></i><i style="left:25.0px;top:5.1px;width:5px;height:5.1px;background:rgb(210,210,210)"></i><i style="left:30.0px;top:5.1px;width:5px;height:5.1px;background:rgb(200,200,200)"></i></div>
<div class="a" style="left:492.1px;top:367.7px;width:25px;height:10.2px;filter:blur(0.5px)"><i style="left:0.0px;top:0.0px;width:5px;height:5.1px;background:rgb(243,243,243)"></i><i style="left:5.0px;top:0.0px;width:5px;height:5.1px;background:rgb(243,243,243)"></i><i style="left:10.0px;top:0.0px;width:5px;height:5.1px;background:rgb(240,240,240)"></i><i style="left:15.0px;top:0.0px;width:5px;height:5.1px;background:rgb(234,234,234)"></i><i style="left:20.0px;top:0.0px;width:5px;height:5.1px;background:rgb(228,228,228)"></i><i style="left:0.0px;top:5.1px;width:5px;height:5.1px;background:rgb(226,226,226)"></i><i style="left:5.0px;top:5.1px;width:5px;height:5.1px;background:rgb(222,222,222)"></i><i style="left:10.0px;top:5.1px;width:5px;height:5.1px;background:rgb(226,226,226)"></i><i style="left:15.0px;top:5.1px;width:5px;height:5.1px;background:rgb(222,222,222)"></i><i style="left:20.0px;top:5.1px;width:5px;height:5.1px;background:rgb(205,205,205)"></i></div>
<div class="a" style="left:551.5px;top:367.9px;width:30px;height:9.8px;filter:blur(0.5px)"><i style="left:0.0px;top:0.0px;width:5px;height:4.9px;background:rgb(237,237,237)"></i><i style="left:5.0px;top:0.0px;width:5px;height:4.9px;background:rgb(220,220,220)"></i><i style="left:10.0px;top:0.0px;width:5px;height:4.9px;background:rgb(237,237,237)"></i><i style="left:15.0px;top:0.0px;width:5px;height:4.9px;background:rgb(237,237,237)"></i><i style="left:20.0px;top:0.0px;width:5px;height:4.9px;background:rgb(240,240,240)"></i><i style="left:25.0px;top:0.0px;width:5px;height:4.9px;background:rgb(225,225,225)"></i><i style="left:0.0px;top:4.9px;width:5px;height:4.9px;background:rgb(214,214,214)"></i><i style="left:5.0px;top:4.9px;width:5px;height:4.9px;background:rgb(200,200,200)"></i><i style="left:10.0px;top:4.9px;width:5px;height:4.9px;background:rgb(218,218,218)"></i><i style="left:15.0px;top:4.9px;width:5px;height:4.9px;background:rgb(218,218,218)"></i><i style="left:20.0px;top:4.9px;width:5px;height:4.9px;background:rgb(222,222,222)"></i><i style="left:25.0px;top:4.9px;width:5px;height:4.9px;background:rgb(205,205,205)"></i></div>
<div class="t tb" style="left:281.5px;top:385.9px;font-size:7.6px;color:#555">17</div>
<div class="t tb" style="left:313px;top:385.9px;font-size:7.6px;color:#555">Copy</div>
<div class="t tb" style="left:363px;top:385.9px;font-size:7.6px;color:#555">2025-09-22 10:05:33</div>
<div class="t tb" style="left:648px;top:385.9px;font-size:7.6px;color:#555">Part #1.mp4</div>
<div class="a" style="left:451.2px;top:384.3px;width:35px;height:10.2px;filter:blur(0.5px)"><i style="left:0.0px;top:0.0px;width:5px;height:5.1px;background:rgb(240,240,240)"></i><i style="left:5.0px;top:0.0px;width:5px;height:5.1px;background:rgb(240,240,240)"></i><i style="left:10.0px;top:0.0px;width:5px;height:5.1px;background:rgb(225,225,225)"></i><i style="left:15.0px;top:0.0px;width:5px;height:5.1px;background:rgb(237,237,237)"></i><i style="left:20.0px;top:0.0px;width:5px;height:5.1px;background:rgb(240,240,240)"></i><i style="left:25.0px;top:0.0px;width:5px;height:5.1px;background:rgb(234,234,234)"></i><i style="left:30.0px;top:0.0px;width:5px;height:5.1px;background:rgb(220,220,220)"></i><i style="left:0.0px;top:5.1px;width:5px;height:5.1px;background:rgb(218,218,218)"></i><i style="left:5.0px;top:5.1px;width:5px;height:5.1px;background:rgb(205,205,205)"></i><i style="left:10.0px;top:5.1px;width:5px;height:5.1px;background:rgb(200,200,200)"></i><i style="left:15.0px;top:5.1px;width:5px;height:5.1px;background:rgb(218,218,218)"></i><i style="left:20.0px;top:5.1px;width:5px;height:5.1px;background:rgb(210,210,210)"></i><i style="left:25.0px;top:5.1px;width:5px;height:5.1px;background:rgb(214,214,214)"></i><i style="left:30.0px;top:5.1px;width:5px;height:5.1px;background:rgb(218,218,218)"></i></div>
<div class="a" style="left:492.1px;top:384.3px;width:25px;height:10.2px;filter:blur(0.5px)"><i style="left:0.0px;top:0.0px;width:5px;height:5.1px;background:rgb(240,240,240)"></i><i style="left:5.0px;top:0.0px;width:5px;height:5.1px;background:rgb(237,237,237)"></i><i style="left:10.0px;top:0.0px;width:5px;height:5.1px;background:rgb(231,231,231)"></i><i style="left:15.0px;top:0.0px;width:5px;height:5.1px;background:rgb(237,237,237)"></i><i style="left:20.0px;top:0.0px;width:5px;height:5.1px;background:rgb(240,240,240)"></i><i style="left:0.0px;top:5.1px;width:5px;height:5.1px;background:rgb(200,200,200)"></i><i style="left:5.0px;top:5.1px;width:5px;height:5.1px;background:rgb(226,226,226)"></i><i style="left:10.0px;top:5.1px;width:5px;height:5.1px;background:rgb(214,214,214)"></i><i style="left:15.0px;top:5.1px;width:5px;height:5.1px;background:rgb(205,205,205)"></i><i style="left:20.0px;top:5.1px;width:5px;height:5.1px;background:rgb(200,200,200)"></i></div>
<div class="a" style="left:551.5px;top:384.5px;width:30px;height:9.8px;filter:blur(0.5px)"><i style="left:0.0px;top:0.0px;width:5px;height:4.9px;background:rgb(240,240,240)"></i><i style="left:5.0px;top:0.0px;width:5px;height:4.9px;background:rgb(243,243,243)"></i><i style="left:10.0px;top:0.0px;width:5px;height:4.9px;background:rgb(228,228,228)"></i><i style="left:15.0px;top:0.0px;width:5px;height:4.9px;background:rgb(234,234,234)"></i><i style="left:20.0px;top:0.0px;width:5px;height:4.9px;background:rgb(243,243,243)"></i><i style="left:25.0px;top:0.0px;width:5px;height:4.9px;background:rgb(220,220,220)"></i><i style="left:0.0px;top:4.9px;width:5px;height:4.9px;background:rgb(210,210,210)"></i><i style="left:5.0px;top:4.9px;width:5px;height:4.9px;background:rgb(210,210,210)"></i><i style="left:10.0px;top:4.9px;width:5px;height:4.9px;background:rgb(232,232,232)"></i><i style="left:15.0px;top:4.9px;width:5px;height:4.9px;background:rgb(226,226,226)"></i><i style="left:20.0px;top:4.9px;width:5px;height:4.9px;background:rgb(222,222,222)"></i><i style="left:25.0px;top:4.9px;width:5px;height:4.9px;background:rgb(218,218,218)"></i></div>
<div class="t tb" style="left:281.5px;top:402.5px;font-size:7.6px;color:#555">18</div>
<div class="t tb" style="left:313px;top:402.5px;font-size:7.6px;color:#555">Delete</div>
<div class="t tb" style="left:363px;top:402.5px;font-size:7.6px;color:#555">2025-09-22 10:05:20</div>
<div class="t tb" style="left:648px;top:402.5px;font-size:7.6px;color:#555">ai-video-enhancer.mp4</div>
<div class="a" style="left:451.2px;top:400.9px;width:35px;height:10.2px;filter:blur(0.5px)"><i style="left:0.0px;top:0.0px;width:5px;height:5.1px;background:rgb(234,234,234)"></i><i style="left:5.0px;top:0.0px;width:5px;height:5.1px;background:rgb(234,234,234)"></i><i style="left:10.0px;top:0.0px;width:5px;height:5.1px;background:rgb(234,234,234)"></i><i style="left:15.0px;top:0.0px;width:5px;height:5.1px;background:rgb(240,240,240)"></i><i style="left:20.0px;top:0.0px;width:5px;height:5.1px;background:rgb(231,231,231)"></i><i style="left:25.0px;top:0.0px;width:5px;height:5.1px;background:rgb(234,234,234)"></i><i style="left:30.0px;top:0.0px;width:5px;height:5.1px;background:rgb(243,243,243)"></i><i style="left:0.0px;top:5.1px;width:5px;height:5.1px;background:rgb(226,226,226)"></i><i style="left:5.0px;top:5.1px;width:5px;height:5.1px;background:rgb(205,205,205)"></i><i style="left:10.0px;top:5.1px;width:5px;height:5.1px;background:rgb(210,210,210)"></i><i style="left:15.0px;top:5.1px;width:5px;height:5.1px;background:rgb(210,210,210)"></i><i style="left:20.0px;top:5.1px;width:5px;height:5.1px;background:rgb(205,205,205)"></i><i style="left:25.0px;top:5.1px;width:5px;height:5.1px;background:rgb(214,214,214)"></i><i style="left:30.0px;top:5.1px;width:5px;height:5.1px;background:rgb(232,232,232)"></i></div>
<div class="a" style="left:492.1px;top:400.9px;width:25px;height:10.2px;filter:blur(0.5px)"><i style="left:0.0px;top:0.0px;width:5px;height:5.1px;background:rgb(231,231,231)"></i><i style="left:5.0px;top:0.0px;width:5px;height:5.1px;background:rgb(243,243,243)"></i><i style="left:10.0px;top:0.0px;width:5px;height:5.1px;background:rgb(237,237,237)"></i><i style="left:15.0px;top:0.0px;width:5px;height:5.1px;background:rgb(243,243,243)"></i><i style="left:20.0px;top:0.0px;width:5px;height:5.1px;background:rgb(240,240,240)"></i><i style="left:0.0px;top:5.1px;width:5px;height:5.1px;background:rgb(210,210,210)"></i><i style="left:5.0px;top:5.1px;width:5px;height:5.1px;background:rgb(214,214,214)"></i><i style="left:10.0px;top:5.1px;width:5px;height:5.1px;background:rgb(214,214,214)"></i><i style="left:15.0px;top:5.1px;width:5px;height:5.1px;background:rgb(205,205,205)"></i><i style="left:20.0px;top:5.1px;width:5px;height:5.1px;background:rgb(210,210,210)"></i></div>
<div class="a" style="left:551.5px;top:401.1px;width:30px;height:9.8px;filter:blur(0.5px)"><i style="left:0.0px;top:0.0px;width:5px;height:4.9px;background:rgb(237,237,237)"></i><i style="left:5.0px;top:0.0px;width:5px;height:4.9px;background:rgb(225,225,225)"></i><i style="left:10.0px;top:0.0px;width:5px;height:4.9px;background:rgb(237,237,237)"></i><i style="left:15.0px;top:0.0px;width:5px;height:4.9px;background:rgb(231,231,231)"></i><i style="left:20.0px;top:0.0px;width:5px;height:4.9px;background:rgb(237,237,237)"></i><i style="left:25.0px;top:0.0px;width:5px;height:4.9px;background:rgb(234,234,234)"></i><i style="left:0.0px;top:4.9px;width:5px;height:4.9px;background:rgb(214,214,214)"></i><i style="left:5.0px;top:4.9px;width:5px;height:4.9px;background:rgb(200,200,200)"></i><i style="left:10.0px;top:4.9px;width:5px;height:4.9px;background:rgb(226,226,226)"></i><i style="left:15.0px;top:4.9px;width:5px;height:4.9px;background:rgb(226,226,226)"></i><i style="left:20.0px;top:4.9px;width:5px;height:4.9px;background:rgb(226,226,226)"></i><i style="left:25.0px;top:4.9px;width:5px;height:4.9px;background:rgb(214,214,214)"></i></div>
<div class="t tb" style="left:281.5px;top:419.1px;font-size:7.6px;color:#555">19</div>
<div class="t tb" style="left:313px;top:419.1px;font-size:7.6px;color:#555">Modify</div>
<div class="t tb" style="left:363px;top:419.1px;font-size:7.6px;color:#555">2025-09-22 10:04:14</div>
<div class="t tb" style="left:648px;top:419.1px;font-size:7.6px;color:#555">web-statistics.png</div>
<div class="t tb" style="left:451.5px;top:419.1px;font-size:7.6px;color:#555">WIN-B8E0P18G79K</div>
<div class="t tb" style="left:553px;top:419.1px;font-size:7.6px;color:#555">Administrator</div>
<div class="t tb" style="left:281.5px;top:435.7px;font-size:7.6px;color:#555">20</div>
<div class="t tb" style="left:313px;top:435.7px;font-size:7.6px;color:#555">Create</div>
<div class="t tb" style="left:363px;top:435.7px;font-size:7.6px;color:#555">2025-09-22 10:04:14</div>
<div class="t tb" style="left:648px;top:435.7px;font-size:7.6px;color:#555">web-statistics.png</div>
<div class="t tb" style="left:451.5px;top:435.7px;font-size:7.6px;color:#555">WIN-B8E0P18G79K</div>
<div class="t tb" style="left:553px;top:435.7px;font-size:7.6px;color:#555">Administrator</div>
<div class="a" style="left:788.7px;top:40.7px;width:5.2px;height:407px;background:#b9b9b9;border-radius:3px"></div>
</body></html>
